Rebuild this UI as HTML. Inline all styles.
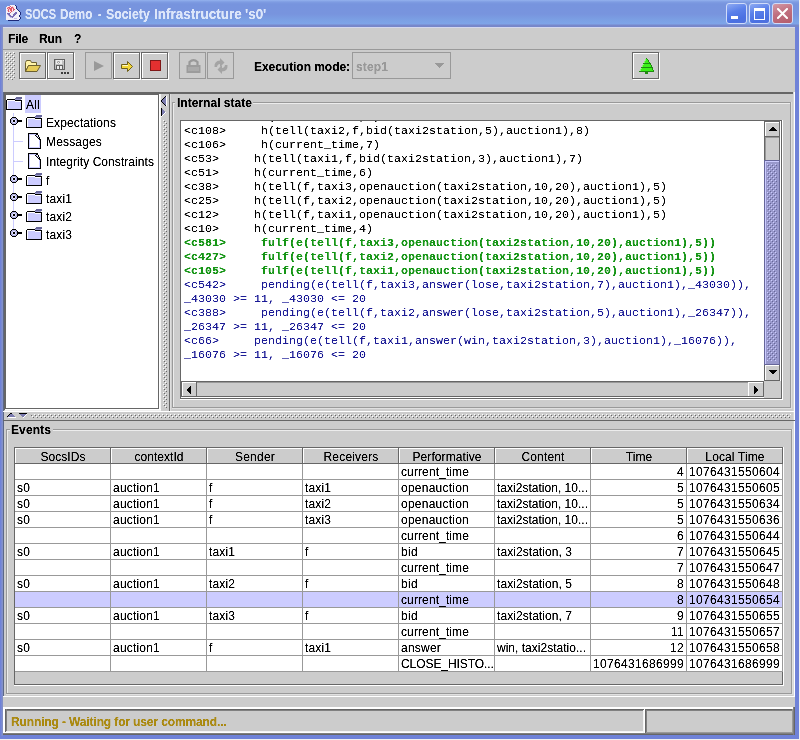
<!DOCTYPE html>
<html><head><meta charset="utf-8"><title>SOCS Demo</title>
<style>
html,body{margin:0;padding:0;width:800px;height:740px;overflow:hidden;background:#f0f0f0}
#root{position:absolute;left:0;top:0;width:800px;height:740px;overflow:hidden;will-change:transform}
#root div{position:absolute;box-sizing:content-box}
svg{display:block}
.t{white-space:pre;filter:url(#crisp)}
.crisp{filter:url(#crisp)}
</style></head><body><div id="root">
<svg width="0" height="0" style="position:absolute;left:0;top:0"><defs><filter id="crisp"><feComponentTransfer><feFuncA type="linear" slope="1.8" intercept="-0.25"/></feComponentTransfer></filter></defs></svg>
<div style="left:0px;top:0px;width:800px;height:740px;background:#f0f0f0;"></div>
<div style="left:0px;top:0px;width:799px;height:739px;background:#6f82d8;"></div>
<div style="left:1px;top:27px;width:1px;height:709px;background:#7a8ad2;"></div>
<div style="left:2px;top:27px;width:1px;height:709px;background:#8290c8;"></div>
<div style="left:0px;top:0px;width:799px;height:27px;background:linear-gradient(#94b2ee 0px,#7e9ce2 2px,#7794de 4px,#7894de 14px,#7ba0e4 20px,#7ea4e8 24px,#7888cc 25px,#7686c8 27px);"></div>
<div style="left:10px;top:5px;width:5px;height:1px;background:#f4f0f8;"></div>
<div style="left:15px;top:5px;width:1px;height:1px;background:#1c2878;"></div>
<div style="left:7px;top:6px;width:2px;height:1px;background:#f4f0f8;"></div>
<div style="left:9px;top:6px;width:1px;height:1px;background:#f2b8c4;"></div>
<div style="left:10px;top:6px;width:1px;height:1px;background:#e25868;"></div>
<div style="left:11px;top:6px;width:1px;height:1px;background:#f4f0f8;"></div>
<div style="left:12px;top:6px;width:1px;height:1px;background:#f2b8c4;"></div>
<div style="left:13px;top:6px;width:3px;height:1px;background:#f4f0f8;"></div>
<div style="left:16px;top:6px;width:1px;height:1px;background:#1c2878;"></div>
<div style="left:6px;top:7px;width:1px;height:1px;background:#f4f0f8;"></div>
<div style="left:7px;top:7px;width:1px;height:1px;background:#f2b8c4;"></div>
<div style="left:8px;top:7px;width:2px;height:1px;background:#e25868;"></div>
<div style="left:10px;top:7px;width:1px;height:1px;background:#f4f0f8;"></div>
<div style="left:11px;top:7px;width:2px;height:1px;background:#e25868;"></div>
<div style="left:13px;top:7px;width:1px;height:1px;background:#f2b8c4;"></div>
<div style="left:14px;top:7px;width:2px;height:1px;background:#f4f0f8;"></div>
<div style="left:16px;top:7px;width:1px;height:1px;background:#1c2878;"></div>
<div style="left:6px;top:8px;width:1px;height:1px;background:#f4f0f8;"></div>
<div style="left:7px;top:8px;width:1px;height:1px;background:#e25868;"></div>
<div style="left:8px;top:8px;width:1px;height:1px;background:#f2b8c4;"></div>
<div style="left:9px;top:8px;width:3px;height:1px;background:#e25868;"></div>
<div style="left:12px;top:8px;width:1px;height:1px;background:#f2b8c4;"></div>
<div style="left:13px;top:8px;width:1px;height:1px;background:#e25868;"></div>
<div style="left:14px;top:8px;width:2px;height:1px;background:#f4f0f8;"></div>
<div style="left:16px;top:8px;width:1px;height:1px;background:#1c2878;"></div>
<div style="left:6px;top:9px;width:2px;height:1px;background:#f4f0f8;"></div>
<div style="left:8px;top:9px;width:1px;height:1px;background:#e25868;"></div>
<div style="left:9px;top:9px;width:1px;height:1px;background:#f2b8c4;"></div>
<div style="left:10px;top:9px;width:2px;height:1px;background:#e25868;"></div>
<div style="left:12px;top:9px;width:1px;height:1px;background:#f4f0f8;"></div>
<div style="left:13px;top:9px;width:2px;height:1px;background:#e25868;"></div>
<div style="left:15px;top:9px;width:2px;height:1px;background:#f4f0f8;"></div>
<div style="left:17px;top:9px;width:1px;height:1px;background:#1c2878;"></div>
<div style="left:6px;top:10px;width:1px;height:1px;background:#f4f0f8;"></div>
<div style="left:7px;top:10px;width:1px;height:1px;background:#f2b8c4;"></div>
<div style="left:8px;top:10px;width:1px;height:1px;background:#e25868;"></div>
<div style="left:9px;top:10px;width:1px;height:1px;background:#f4f0f8;"></div>
<div style="left:10px;top:10px;width:2px;height:1px;background:#e25868;"></div>
<div style="left:12px;top:10px;width:1px;height:1px;background:#f4f0f8;"></div>
<div style="left:13px;top:10px;width:1px;height:1px;background:#e25868;"></div>
<div style="left:14px;top:10px;width:4px;height:1px;background:#f4f0f8;"></div>
<div style="left:18px;top:10px;width:1px;height:1px;background:#1c2878;"></div>
<div style="left:6px;top:11px;width:2px;height:1px;background:#f4f0f8;"></div>
<div style="left:8px;top:11px;width:1px;height:1px;background:#e25868;"></div>
<div style="left:9px;top:11px;width:1px;height:1px;background:#f2b8c4;"></div>
<div style="left:10px;top:11px;width:1px;height:1px;background:#f4f0f8;"></div>
<div style="left:11px;top:11px;width:1px;height:1px;background:#e25868;"></div>
<div style="left:12px;top:11px;width:1px;height:1px;background:#f2b8c4;"></div>
<div style="left:13px;top:11px;width:6px;height:1px;background:#f4f0f8;"></div>
<div style="left:19px;top:11px;width:1px;height:1px;background:#1c2878;"></div>
<div style="left:6px;top:12px;width:4px;height:1px;background:#f4f0f8;"></div>
<div style="left:10px;top:12px;width:1px;height:1px;background:#e25868;"></div>
<div style="left:11px;top:12px;width:4px;height:1px;background:#f4f0f8;"></div>
<div style="left:15px;top:12px;width:2px;height:1px;background:#7a6cb4;"></div>
<div style="left:17px;top:12px;width:3px;height:1px;background:#f4f0f8;"></div>
<div style="left:20px;top:12px;width:1px;height:1px;background:#1c2878;"></div>
<div style="left:6px;top:13px;width:1px;height:1px;background:#f4f0f8;"></div>
<div style="left:7px;top:13px;width:3px;height:1px;background:#7a6cb4;"></div>
<div style="left:10px;top:13px;width:4px;height:1px;background:#f4f0f8;"></div>
<div style="left:14px;top:13px;width:3px;height:1px;background:#7a6cb4;"></div>
<div style="left:17px;top:13px;width:3px;height:1px;background:#f4f0f8;"></div>
<div style="left:20px;top:13px;width:1px;height:1px;background:#1c2878;"></div>
<div style="left:6px;top:14px;width:1px;height:1px;background:#f4f0f8;"></div>
<div style="left:7px;top:14px;width:1px;height:1px;background:#c4bce6;"></div>
<div style="left:8px;top:14px;width:2px;height:1px;background:#7a6cb4;"></div>
<div style="left:10px;top:14px;width:3px;height:1px;background:#f4f0f8;"></div>
<div style="left:13px;top:14px;width:3px;height:1px;background:#7a6cb4;"></div>
<div style="left:16px;top:14px;width:4px;height:1px;background:#f4f0f8;"></div>
<div style="left:20px;top:14px;width:1px;height:1px;background:#1c2878;"></div>
<div style="left:6px;top:15px;width:2px;height:1px;background:#f4f0f8;"></div>
<div style="left:8px;top:15px;width:1px;height:1px;background:#c4bce6;"></div>
<div style="left:9px;top:15px;width:2px;height:1px;background:#7a6cb4;"></div>
<div style="left:11px;top:15px;width:2px;height:1px;background:#f4f0f8;"></div>
<div style="left:13px;top:15px;width:2px;height:1px;background:#7a6cb4;"></div>
<div style="left:15px;top:15px;width:4px;height:1px;background:#f4f0f8;"></div>
<div style="left:19px;top:15px;width:1px;height:1px;background:#1c2878;"></div>
<div style="left:6px;top:16px;width:3px;height:1px;background:#f4f0f8;"></div>
<div style="left:9px;top:16px;width:1px;height:1px;background:#c4bce6;"></div>
<div style="left:10px;top:16px;width:4px;height:1px;background:#7a6cb4;"></div>
<div style="left:14px;top:16px;width:5px;height:1px;background:#f4f0f8;"></div>
<div style="left:19px;top:16px;width:1px;height:1px;background:#1c2878;"></div>
<div style="left:6px;top:17px;width:4px;height:1px;background:#f4f0f8;"></div>
<div style="left:10px;top:17px;width:2px;height:1px;background:#c4bce6;"></div>
<div style="left:12px;top:17px;width:1px;height:1px;background:#7a6cb4;"></div>
<div style="left:13px;top:17px;width:7px;height:1px;background:#f4f0f8;"></div>
<div style="left:20px;top:17px;width:1px;height:1px;background:#1c2878;"></div>
<div style="left:6px;top:18px;width:8px;height:1px;background:#f4f0f8;"></div>
<div style="left:14px;top:18px;width:3px;height:1px;background:#c4bce6;"></div>
<div style="left:17px;top:18px;width:3px;height:1px;background:#f4f0f8;"></div>
<div style="left:20px;top:18px;width:1px;height:1px;background:#1c2878;"></div>
<div style="left:6px;top:19px;width:13px;height:1px;background:#f4f0f8;"></div>
<div style="left:19px;top:19px;width:1px;height:1px;background:#1c2878;"></div>
<div style="left:8px;top:20px;width:11px;height:1px;background:#1c2878;"></div>
<div class="t" style="left:25px;top:4px;font:bold 14px 'Liberation Sans', sans-serif;line-height:20px;color:#dce6fa;transform:scaleX(0.783);transform-origin:0 0">SOCS</div>
<div class="t" style="left:60px;top:4px;font:bold 14px 'Liberation Sans', sans-serif;line-height:20px;color:#dce6fa;transform:scaleX(0.831);transform-origin:0 0">Demo</div>
<div class="t" style="left:98px;top:4px;font:bold 14px 'Liberation Sans', sans-serif;line-height:20px;color:#dce6fa;transform:scaleX(0.750);transform-origin:0 0">-</div>
<div class="t" style="left:106px;top:4px;font:bold 14px 'Liberation Sans', sans-serif;line-height:20px;color:#dce6fa;transform:scaleX(0.878);transform-origin:0 0">Society</div>
<div class="t" style="left:154px;top:4px;font:bold 14px 'Liberation Sans', sans-serif;line-height:20px;color:#dce6fa;transform:scaleX(0.965);transform-origin:0 0">Infrastructure</div>
<div class="t" style="left:245px;top:4px;font:bold 14px 'Liberation Sans', sans-serif;line-height:20px;color:#dce6fa;transform:scaleX(0.957);transform-origin:0 0">&#x27;s0&#x27;</div>
<div style="left:726px;top:3px;width:19px;height:19px;border:1px solid #d0dcfa;border-radius:3px;background:linear-gradient(160deg,#8eaaf2 0%,#5a80ea 40%,#4a70e2 75%,#5070dc 100%)"></div>
<div style="left:749px;top:3px;width:19px;height:19px;border:1px solid #d0dcfa;border-radius:3px;background:linear-gradient(160deg,#8eaaf2 0%,#5a80ea 40%,#4a70e2 75%,#5070dc 100%)"></div>
<div style="left:772px;top:3px;width:19px;height:19px;border:1px solid #d0dcfa;border-radius:3px;background:linear-gradient(160deg,#d49aa6 0%,#c07080 45%,#b45c6c 100%)"></div>
<div style="left:731px;top:16px;width:7px;height:3px;background:#ffffff;"></div>
<div style="left:754px;top:8px;width:9px;height:8px;border:1px solid #fff;border-top-width:3px"></div>
<svg style="position:absolute;left:777px;top:8px" width="11" height="11" viewBox="0 0 11 11">
<path d="M1 1 L10 10 M10 1 L1 10" stroke="#fff" stroke-width="2" stroke-linecap="square"/></svg>
<div style="left:3px;top:27px;width:792px;height:708px;background:#cccccc;"></div>
<div style="left:3px;top:27px;width:792px;height:1px;background:#d4d8ee;"></div>
<div class="t" style="left:8px;top:29px;font:bold 12px 'Liberation Sans', sans-serif;line-height:20px;color:#000;letter-spacing:-0.168px;">File</div>
<div class="t" style="left:39px;top:29px;font:bold 12px 'Liberation Sans', sans-serif;line-height:20px;color:#000;letter-spacing:-0.109px;">Run</div>
<div class="t" style="left:74px;top:29px;font:bold 12px 'Liberation Sans', sans-serif;line-height:20px;color:#000;letter-spacing:-0.330px;">?</div>
<div style="left:3px;top:49px;width:792px;height:1px;background:#999999;"></div>
<svg style="position:absolute;left:5px;top:52px" width="10" height="28" shape-rendering="crispEdges">
<defs><pattern id="p1" x="0" y="0" width="4" height="4" patternUnits="userSpaceOnUse">
<rect width="4" height="4" fill="#cccccc"/>
<rect x="0" y="0" width="1" height="1" fill="#ffffff"/><rect x="2" y="2" width="1" height="1" fill="#ffffff"/>
<rect x="1" y="1" width="1" height="1" fill="#707070"/><rect x="3" y="3" width="1" height="1" fill="#707070"/>
</pattern></defs><rect width="10" height="28" fill="url(#p1)"/></svg>
<div style="left:20px;top:53px;width:27px;height:1px;background:#ffffff;"></div>
<div style="left:20px;top:79px;width:27px;height:1px;background:#ffffff;"></div>
<div style="left:20px;top:53px;width:1px;height:27px;background:#ffffff;"></div>
<div style="left:46px;top:53px;width:1px;height:27px;background:#ffffff;"></div>
<div style="left:19px;top:52px;width:27px;height:1px;background:#666666;"></div>
<div style="left:19px;top:78px;width:27px;height:1px;background:#666666;"></div>
<div style="left:19px;top:52px;width:1px;height:27px;background:#666666;"></div>
<div style="left:45px;top:52px;width:1px;height:27px;background:#666666;"></div>
<div style="left:48px;top:53px;width:27px;height:1px;background:#ffffff;"></div>
<div style="left:48px;top:79px;width:27px;height:1px;background:#ffffff;"></div>
<div style="left:48px;top:53px;width:1px;height:27px;background:#ffffff;"></div>
<div style="left:74px;top:53px;width:1px;height:27px;background:#ffffff;"></div>
<div style="left:47px;top:52px;width:27px;height:1px;background:#666666;"></div>
<div style="left:47px;top:78px;width:27px;height:1px;background:#666666;"></div>
<div style="left:47px;top:52px;width:1px;height:27px;background:#666666;"></div>
<div style="left:73px;top:52px;width:1px;height:27px;background:#666666;"></div>
<div style="left:85px;top:52px;width:27px;height:1px;background:#999999;"></div>
<div style="left:85px;top:78px;width:27px;height:1px;background:#999999;"></div>
<div style="left:85px;top:52px;width:1px;height:27px;background:#999999;"></div>
<div style="left:111px;top:52px;width:1px;height:27px;background:#999999;"></div>
<div style="left:114px;top:53px;width:27px;height:1px;background:#ffffff;"></div>
<div style="left:114px;top:79px;width:27px;height:1px;background:#ffffff;"></div>
<div style="left:114px;top:53px;width:1px;height:27px;background:#ffffff;"></div>
<div style="left:140px;top:53px;width:1px;height:27px;background:#ffffff;"></div>
<div style="left:113px;top:52px;width:27px;height:1px;background:#666666;"></div>
<div style="left:113px;top:78px;width:27px;height:1px;background:#666666;"></div>
<div style="left:113px;top:52px;width:1px;height:27px;background:#666666;"></div>
<div style="left:139px;top:52px;width:1px;height:27px;background:#666666;"></div>
<div style="left:142px;top:53px;width:27px;height:1px;background:#ffffff;"></div>
<div style="left:142px;top:79px;width:27px;height:1px;background:#ffffff;"></div>
<div style="left:142px;top:53px;width:1px;height:27px;background:#ffffff;"></div>
<div style="left:168px;top:53px;width:1px;height:27px;background:#ffffff;"></div>
<div style="left:141px;top:52px;width:27px;height:1px;background:#666666;"></div>
<div style="left:141px;top:78px;width:27px;height:1px;background:#666666;"></div>
<div style="left:141px;top:52px;width:1px;height:27px;background:#666666;"></div>
<div style="left:167px;top:52px;width:1px;height:27px;background:#666666;"></div>
<div style="left:179px;top:52px;width:27px;height:1px;background:#999999;"></div>
<div style="left:179px;top:78px;width:27px;height:1px;background:#999999;"></div>
<div style="left:179px;top:52px;width:1px;height:27px;background:#999999;"></div>
<div style="left:205px;top:52px;width:1px;height:27px;background:#999999;"></div>
<div style="left:207px;top:52px;width:27px;height:1px;background:#999999;"></div>
<div style="left:207px;top:78px;width:27px;height:1px;background:#999999;"></div>
<div style="left:207px;top:52px;width:1px;height:27px;background:#999999;"></div>
<div style="left:233px;top:52px;width:1px;height:27px;background:#999999;"></div>
<div style="left:633px;top:53px;width:27px;height:1px;background:#ffffff;"></div>
<div style="left:633px;top:79px;width:27px;height:1px;background:#ffffff;"></div>
<div style="left:633px;top:53px;width:1px;height:27px;background:#ffffff;"></div>
<div style="left:659px;top:53px;width:1px;height:27px;background:#ffffff;"></div>
<div style="left:632px;top:52px;width:27px;height:1px;background:#666666;"></div>
<div style="left:632px;top:78px;width:27px;height:1px;background:#666666;"></div>
<div style="left:632px;top:52px;width:1px;height:27px;background:#666666;"></div>
<div style="left:658px;top:52px;width:1px;height:27px;background:#666666;"></div>
<svg style="position:absolute;left:24px;top:59px" width="18" height="15" viewBox="0 0 18 15">
<path d="M1.5 3.5 L2.5 1.5 L6.5 1.5 L7.5 3.5 L12.5 3.5 L12.5 6.5 L4.5 6.5 L1.5 12.5 Z" fill="#fff3a8" stroke="#6c6030" stroke-width="1"/>
<path d="M1.5 12.5 L4.5 6.5 L16.5 6.5 L13 12.5 Z" fill="#e6cc58" stroke="#6c6030" stroke-width="1"/>
</svg>
<div style="left:54px;top:59px;width:11px;height:1px;background:#606060;"></div>
<div style="left:54px;top:60px;width:1px;height:1px;background:#606060;"></div>
<div style="left:55px;top:60px;width:1px;height:1px;background:#c0c0c0;"></div>
<div style="left:56px;top:60px;width:6px;height:1px;background:#ececec;"></div>
<div style="left:62px;top:60px;width:1px;height:1px;background:#c0c0c0;"></div>
<div style="left:63px;top:60px;width:1px;height:1px;background:#ececec;"></div>
<div style="left:64px;top:60px;width:1px;height:1px;background:#606060;"></div>
<div style="left:54px;top:61px;width:1px;height:1px;background:#606060;"></div>
<div style="left:55px;top:61px;width:1px;height:1px;background:#c0c0c0;"></div>
<div style="left:56px;top:61px;width:1px;height:1px;background:#ececec;"></div>
<div style="left:57px;top:61px;width:1px;height:1px;background:#c0c0c0;"></div>
<div style="left:58px;top:61px;width:1px;height:1px;background:#a0a0a0;"></div>
<div style="left:59px;top:61px;width:1px;height:1px;background:#c0c0c0;"></div>
<div style="left:60px;top:61px;width:2px;height:1px;background:#ececec;"></div>
<div style="left:62px;top:61px;width:2px;height:1px;background:#c0c0c0;"></div>
<div style="left:64px;top:61px;width:1px;height:1px;background:#606060;"></div>
<div style="left:54px;top:62px;width:1px;height:1px;background:#606060;"></div>
<div style="left:55px;top:62px;width:1px;height:1px;background:#c0c0c0;"></div>
<div style="left:56px;top:62px;width:1px;height:1px;background:#ececec;"></div>
<div style="left:57px;top:62px;width:1px;height:1px;background:#a0a0a0;"></div>
<div style="left:58px;top:62px;width:1px;height:1px;background:#ececec;"></div>
<div style="left:59px;top:62px;width:1px;height:1px;background:#a0a0a0;"></div>
<div style="left:60px;top:62px;width:2px;height:1px;background:#ececec;"></div>
<div style="left:62px;top:62px;width:2px;height:1px;background:#c0c0c0;"></div>
<div style="left:64px;top:62px;width:1px;height:1px;background:#606060;"></div>
<div style="left:54px;top:63px;width:1px;height:1px;background:#606060;"></div>
<div style="left:55px;top:63px;width:1px;height:1px;background:#c0c0c0;"></div>
<div style="left:56px;top:63px;width:2px;height:1px;background:#ececec;"></div>
<div style="left:58px;top:63px;width:1px;height:1px;background:#c0c0c0;"></div>
<div style="left:59px;top:63px;width:3px;height:1px;background:#ececec;"></div>
<div style="left:62px;top:63px;width:2px;height:1px;background:#c0c0c0;"></div>
<div style="left:64px;top:63px;width:1px;height:1px;background:#606060;"></div>
<div style="left:54px;top:64px;width:1px;height:1px;background:#606060;"></div>
<div style="left:55px;top:64px;width:9px;height:1px;background:#c0c0c0;"></div>
<div style="left:64px;top:64px;width:1px;height:1px;background:#606060;"></div>
<div style="left:54px;top:65px;width:1px;height:1px;background:#606060;"></div>
<div style="left:55px;top:65px;width:1px;height:1px;background:#c0c0c0;"></div>
<div style="left:56px;top:65px;width:7px;height:1px;background:#606060;"></div>
<div style="left:63px;top:65px;width:1px;height:1px;background:#c0c0c0;"></div>
<div style="left:64px;top:65px;width:1px;height:1px;background:#606060;"></div>
<div style="left:54px;top:66px;width:1px;height:1px;background:#606060;"></div>
<div style="left:55px;top:66px;width:1px;height:1px;background:#c0c0c0;"></div>
<div style="left:56px;top:66px;width:1px;height:1px;background:#606060;"></div>
<div style="left:57px;top:66px;width:2px;height:1px;background:#ececec;"></div>
<div style="left:59px;top:66px;width:1px;height:1px;background:#606060;"></div>
<div style="left:60px;top:66px;width:2px;height:1px;background:#ececec;"></div>
<div style="left:62px;top:66px;width:1px;height:1px;background:#606060;"></div>
<div style="left:63px;top:66px;width:1px;height:1px;background:#c0c0c0;"></div>
<div style="left:64px;top:66px;width:1px;height:1px;background:#606060;"></div>
<div style="left:54px;top:67px;width:1px;height:1px;background:#606060;"></div>
<div style="left:55px;top:67px;width:1px;height:1px;background:#c0c0c0;"></div>
<div style="left:56px;top:67px;width:1px;height:1px;background:#606060;"></div>
<div style="left:57px;top:67px;width:2px;height:1px;background:#ececec;"></div>
<div style="left:59px;top:67px;width:1px;height:1px;background:#606060;"></div>
<div style="left:60px;top:67px;width:2px;height:1px;background:#ececec;"></div>
<div style="left:62px;top:67px;width:1px;height:1px;background:#606060;"></div>
<div style="left:63px;top:67px;width:1px;height:1px;background:#c0c0c0;"></div>
<div style="left:64px;top:67px;width:1px;height:1px;background:#606060;"></div>
<div style="left:54px;top:68px;width:1px;height:1px;background:#606060;"></div>
<div style="left:55px;top:68px;width:1px;height:1px;background:#c0c0c0;"></div>
<div style="left:56px;top:68px;width:1px;height:1px;background:#606060;"></div>
<div style="left:57px;top:68px;width:2px;height:1px;background:#ececec;"></div>
<div style="left:59px;top:68px;width:1px;height:1px;background:#606060;"></div>
<div style="left:60px;top:68px;width:2px;height:1px;background:#ececec;"></div>
<div style="left:62px;top:68px;width:1px;height:1px;background:#606060;"></div>
<div style="left:63px;top:68px;width:1px;height:1px;background:#c0c0c0;"></div>
<div style="left:64px;top:68px;width:1px;height:1px;background:#606060;"></div>
<div style="left:54px;top:69px;width:11px;height:1px;background:#606060;"></div>
<div style="left:61px;top:72px;width:2px;height:1px;background:#3c3c3c;"></div>
<div style="left:64px;top:72px;width:2px;height:1px;background:#3c3c3c;"></div>
<div style="left:67px;top:72px;width:2px;height:1px;background:#3c3c3c;"></div>
<div style="left:61px;top:73px;width:2px;height:1px;background:#3c3c3c;"></div>
<div style="left:64px;top:73px;width:2px;height:1px;background:#3c3c3c;"></div>
<div style="left:67px;top:73px;width:2px;height:1px;background:#3c3c3c;"></div>
<svg style="position:absolute;left:94px;top:61px" width="11" height="11"><path d="M0 0 L10 5 L0 10 Z" fill="#999"/></svg>
<svg style="position:absolute;left:120px;top:60px" width="14" height="13" viewBox="0 0 14 13">
<path d="M1.5 4.5 L7.5 4.5 L7.5 1.5 L12.5 6.5 L7.5 11.5 L7.5 8.5 L1.5 8.5 Z" fill="#f4d838" stroke="#706018" stroke-width="1"/>
<path d="M2.5 5.5 L8 5.5" stroke="#fff8c8" stroke-width="1"/></svg>
<div style="left:150px;top:60px;width:11px;height:11px;background:#801818;"></div>
<div style="left:151px;top:61px;width:9px;height:9px;background:#e43030;"></div>
<svg style="position:absolute;left:185px;top:57px" width="17" height="18" viewBox="0 0 17 18">
<path d="M4.5 8 L4.5 5 Q8.5 1 12.5 5 L12.5 8" fill="none" stroke="#999" stroke-width="2.2"/>
<rect x="1.5" y="8" width="14" height="8" fill="#9c9c9c"/>
<path d="M3 11 H14 M3 13 H14" stroke="#b8b8b8" stroke-width="1"/></svg>
<svg style="position:absolute;left:212px;top:57px" width="18" height="18" viewBox="0 0 18 18">
<path d="M2.5 10 Q2 4 8 3.5 L8 1 L12.5 5.5 L8 10 L8 7 Q5.5 7 5 10 Z" fill="#a4a4a4"/>
<path d="M15.5 8 Q16 14 10 14.5 L10 17 L5.5 12.5 L10 8 L10 11 Q12.5 11 13 8 Z" fill="#a4a4a4"/></svg>
<div style="left:646px;top:58px;width:1px;height:1px;background:#1f8a10;"></div>
<div style="left:645px;top:59px;width:1px;height:1px;background:#8cf070;"></div>
<div style="left:646px;top:59px;width:1px;height:1px;background:#3cf018;"></div>
<div style="left:647px;top:59px;width:1px;height:1px;background:#1f8a10;"></div>
<div style="left:645px;top:60px;width:1px;height:1px;background:#8cf070;"></div>
<div style="left:646px;top:60px;width:2px;height:1px;background:#3cf018;"></div>
<div style="left:648px;top:60px;width:1px;height:1px;background:#1f8a10;"></div>
<div style="left:644px;top:61px;width:1px;height:1px;background:#8cf070;"></div>
<div style="left:645px;top:61px;width:3px;height:1px;background:#3cf018;"></div>
<div style="left:648px;top:61px;width:1px;height:1px;background:#1f8a10;"></div>
<div style="left:644px;top:62px;width:1px;height:1px;background:#8cf070;"></div>
<div style="left:645px;top:62px;width:4px;height:1px;background:#3cf018;"></div>
<div style="left:649px;top:62px;width:1px;height:1px;background:#1f8a10;"></div>
<div style="left:643px;top:63px;width:8px;height:1px;background:#1f8a10;"></div>
<div style="left:643px;top:64px;width:1px;height:1px;background:#8cf070;"></div>
<div style="left:644px;top:64px;width:6px;height:1px;background:#3cf018;"></div>
<div style="left:650px;top:64px;width:1px;height:1px;background:#1f8a10;"></div>
<div style="left:642px;top:65px;width:1px;height:1px;background:#8cf070;"></div>
<div style="left:643px;top:65px;width:8px;height:1px;background:#3cf018;"></div>
<div style="left:651px;top:65px;width:1px;height:1px;background:#1f8a10;"></div>
<div style="left:642px;top:66px;width:1px;height:1px;background:#8cf070;"></div>
<div style="left:643px;top:66px;width:8px;height:1px;background:#3cf018;"></div>
<div style="left:651px;top:66px;width:1px;height:1px;background:#1f8a10;"></div>
<div style="left:641px;top:67px;width:12px;height:1px;background:#1f8a10;"></div>
<div style="left:641px;top:68px;width:1px;height:1px;background:#8cf070;"></div>
<div style="left:642px;top:68px;width:10px;height:1px;background:#3cf018;"></div>
<div style="left:652px;top:68px;width:1px;height:1px;background:#1f8a10;"></div>
<div style="left:640px;top:69px;width:1px;height:1px;background:#8cf070;"></div>
<div style="left:641px;top:69px;width:11px;height:1px;background:#3cf018;"></div>
<div style="left:652px;top:69px;width:1px;height:1px;background:#1f8a10;"></div>
<div style="left:640px;top:70px;width:1px;height:1px;background:#8cf070;"></div>
<div style="left:641px;top:70px;width:12px;height:1px;background:#3cf018;"></div>
<div style="left:653px;top:70px;width:1px;height:1px;background:#1f8a10;"></div>
<div style="left:639px;top:71px;width:15px;height:1px;background:#1f8a10;"></div>
<div style="left:645px;top:72px;width:3px;height:1px;background:#1f8a10;"></div>
<div style="left:645px;top:73px;width:3px;height:1px;background:#1f8a10;"></div>
<div class="t" style="left:254px;top:57px;font:bold 12px 'Liberation Sans', sans-serif;line-height:20px;color:#000;letter-spacing:-0.045px;">Execution mode:</div>
<div style="left:352px;top:52px;width:99px;height:1px;background:#999999;"></div>
<div style="left:352px;top:78px;width:99px;height:1px;background:#999999;"></div>
<div style="left:352px;top:52px;width:1px;height:27px;background:#999999;"></div>
<div style="left:450px;top:52px;width:1px;height:27px;background:#999999;"></div>
<div class="t" style="left:356px;top:57px;font:bold 12px 'Liberation Sans', sans-serif;line-height:20px;color:#999999;letter-spacing:0.130px;">step1</div>
<svg style="position:absolute;left:434px;top:63px" width="11" height="6" shape-rendering="crispEdges"><path d="M0 0 L10 0 L5 5 Z" fill="#999"/></svg>
<div style="left:3px;top:92px;width:792px;height:1px;background:#666666;"></div>
<div style="left:3px;top:93px;width:792px;height:1px;background:#666666;"></div>
<div style="left:3px;top:92px;width:1px;height:605px;background:#5c6888;"></div>
<div style="left:4px;top:92px;width:1px;height:318px;background:#666666;"></div>
<div style="left:793px;top:92px;width:1px;height:605px;background:#d8d8d8;"></div>
<div style="left:794px;top:92px;width:1px;height:605px;background:#ffffff;"></div>
<div style="left:3px;top:696px;width:792px;height:1px;background:#ffffff;"></div>
<div style="left:6px;top:95px;width:152px;height:313px;background:#ffffff;"></div>
<div style="left:5px;top:94px;width:154px;height:1px;background:#666666;"></div>
<div style="left:5px;top:408px;width:154px;height:1px;background:#666666;"></div>
<div style="left:5px;top:94px;width:1px;height:315px;background:#666666;"></div>
<div style="left:158px;top:94px;width:1px;height:315px;background:#666666;"></div>
<div style="left:159px;top:94px;width:1px;height:317px;background:#ffffff;"></div>
<div style="left:160px;top:94px;width:1px;height:317px;background:#f4f4f4;"></div>
<div style="left:5px;top:409px;width:156px;height:1px;background:#ffffff;"></div>
<div style="left:5px;top:410px;width:156px;height:1px;background:#f0f0f0;"></div>
<div style="left:13px;top:113px;width:1px;height:122px;background:#ccccff;"></div>
<div style="left:14px;top:141px;width:9px;height:1px;background:#ccccff;"></div>
<div style="left:14px;top:161px;width:9px;height:1px;background:#ccccff;"></div>
<div style="left:25px;top:95px;width:16px;height:18px;background:#ccccff;"></div>
<div style="left:16px;top:97px;width:6px;height:1px;background:#666699;"></div>
<div style="left:15px;top:98px;width:7px;height:1px;background:#666699;"></div>
<div style="left:7px;top:99px;width:8px;height:1px;background:#000000;"></div>
<div style="left:15px;top:99px;width:6px;height:1px;background:#9999cc;"></div>
<div style="left:6px;top:100px;width:1px;height:1px;background:#000000;"></div>
<div style="left:7px;top:100px;width:8px;height:1px;background:#ffffff;"></div>
<div style="left:15px;top:100px;width:7px;height:1px;background:#000000;"></div>
<div style="left:6px;top:101px;width:1px;height:1px;background:#000000;"></div>
<div style="left:7px;top:101px;width:1px;height:1px;background:#ffffff;"></div>
<div style="left:8px;top:101px;width:7px;height:1px;background:#ccccff;"></div>
<div style="left:15px;top:101px;width:6px;height:1px;background:#ffffff;"></div>
<div style="left:21px;top:101px;width:1px;height:1px;background:#000000;"></div>
<div style="left:6px;top:102px;width:1px;height:1px;background:#000000;"></div>
<div style="left:7px;top:102px;width:1px;height:1px;background:#ffffff;"></div>
<div style="left:8px;top:102px;width:13px;height:1px;background:#ccccff;"></div>
<div style="left:21px;top:102px;width:1px;height:1px;background:#000000;"></div>
<div style="left:6px;top:103px;width:1px;height:1px;background:#000000;"></div>
<div style="left:7px;top:103px;width:1px;height:1px;background:#ffffff;"></div>
<div style="left:8px;top:103px;width:13px;height:1px;background:#ccccff;"></div>
<div style="left:21px;top:103px;width:1px;height:1px;background:#000000;"></div>
<div style="left:6px;top:104px;width:1px;height:1px;background:#000000;"></div>
<div style="left:7px;top:104px;width:1px;height:1px;background:#ffffff;"></div>
<div style="left:8px;top:104px;width:13px;height:1px;background:#ccccff;"></div>
<div style="left:21px;top:104px;width:1px;height:1px;background:#000000;"></div>
<div style="left:6px;top:105px;width:1px;height:1px;background:#000000;"></div>
<div style="left:7px;top:105px;width:1px;height:1px;background:#ffffff;"></div>
<div style="left:8px;top:105px;width:13px;height:1px;background:#ccccff;"></div>
<div style="left:21px;top:105px;width:1px;height:1px;background:#000000;"></div>
<div style="left:6px;top:106px;width:1px;height:1px;background:#000000;"></div>
<div style="left:7px;top:106px;width:1px;height:1px;background:#ffffff;"></div>
<div style="left:8px;top:106px;width:13px;height:1px;background:#ccccff;"></div>
<div style="left:21px;top:106px;width:1px;height:1px;background:#000000;"></div>
<div style="left:6px;top:107px;width:1px;height:1px;background:#000000;"></div>
<div style="left:7px;top:107px;width:1px;height:1px;background:#ffffff;"></div>
<div style="left:8px;top:107px;width:13px;height:1px;background:#ccccff;"></div>
<div style="left:21px;top:107px;width:1px;height:1px;background:#000000;"></div>
<div style="left:6px;top:108px;width:1px;height:1px;background:#000000;"></div>
<div style="left:7px;top:108px;width:1px;height:1px;background:#ffffff;"></div>
<div style="left:8px;top:108px;width:13px;height:1px;background:#ccccff;"></div>
<div style="left:21px;top:108px;width:1px;height:1px;background:#000000;"></div>
<div style="left:6px;top:109px;width:16px;height:1px;background:#000000;"></div>
<div class="t" style="left:26px;top:95px;font:12px 'Liberation Sans', sans-serif;line-height:20px;color:#000;letter-spacing:0.221px;">All</div>
<div style="left:12px;top:117px;width:4px;height:1px;background:#000000;"></div>
<div style="left:11px;top:118px;width:1px;height:1px;background:#000000;"></div>
<div style="left:12px;top:118px;width:4px;height:1px;background:#b4b4e4;"></div>
<div style="left:16px;top:118px;width:1px;height:1px;background:#000000;"></div>
<div style="left:10px;top:119px;width:1px;height:1px;background:#000000;"></div>
<div style="left:11px;top:119px;width:2px;height:1px;background:#b4b4e4;"></div>
<div style="left:13px;top:119px;width:2px;height:1px;background:#e4e4ff;"></div>
<div style="left:15px;top:119px;width:2px;height:1px;background:#b4b4e4;"></div>
<div style="left:17px;top:119px;width:1px;height:1px;background:#000000;"></div>
<div style="left:10px;top:120px;width:1px;height:1px;background:#000000;"></div>
<div style="left:11px;top:120px;width:1px;height:1px;background:#b4b4e4;"></div>
<div style="left:12px;top:120px;width:1px;height:1px;background:#e4e4ff;"></div>
<div style="left:13px;top:120px;width:2px;height:1px;background:#000000;"></div>
<div style="left:15px;top:120px;width:1px;height:1px;background:#e4e4ff;"></div>
<div style="left:16px;top:120px;width:1px;height:1px;background:#b4b4e4;"></div>
<div style="left:17px;top:120px;width:5px;height:1px;background:#000000;"></div>
<div style="left:10px;top:121px;width:1px;height:1px;background:#000000;"></div>
<div style="left:11px;top:121px;width:1px;height:1px;background:#b4b4e4;"></div>
<div style="left:12px;top:121px;width:1px;height:1px;background:#e4e4ff;"></div>
<div style="left:13px;top:121px;width:2px;height:1px;background:#000000;"></div>
<div style="left:15px;top:121px;width:1px;height:1px;background:#e4e4ff;"></div>
<div style="left:16px;top:121px;width:1px;height:1px;background:#b4b4e4;"></div>
<div style="left:17px;top:121px;width:5px;height:1px;background:#000000;"></div>
<div style="left:10px;top:122px;width:1px;height:1px;background:#000000;"></div>
<div style="left:11px;top:122px;width:2px;height:1px;background:#b4b4e4;"></div>
<div style="left:13px;top:122px;width:2px;height:1px;background:#e4e4ff;"></div>
<div style="left:15px;top:122px;width:2px;height:1px;background:#b4b4e4;"></div>
<div style="left:17px;top:122px;width:1px;height:1px;background:#000000;"></div>
<div style="left:11px;top:123px;width:1px;height:1px;background:#000000;"></div>
<div style="left:12px;top:123px;width:4px;height:1px;background:#b4b4e4;"></div>
<div style="left:16px;top:123px;width:1px;height:1px;background:#000000;"></div>
<div style="left:12px;top:124px;width:4px;height:1px;background:#000000;"></div>
<div style="left:36px;top:115px;width:6px;height:1px;background:#666699;"></div>
<div style="left:35px;top:116px;width:7px;height:1px;background:#666699;"></div>
<div style="left:27px;top:117px;width:8px;height:1px;background:#000000;"></div>
<div style="left:35px;top:117px;width:6px;height:1px;background:#9999cc;"></div>
<div style="left:26px;top:118px;width:1px;height:1px;background:#000000;"></div>
<div style="left:27px;top:118px;width:8px;height:1px;background:#ffffff;"></div>
<div style="left:35px;top:118px;width:7px;height:1px;background:#000000;"></div>
<div style="left:26px;top:119px;width:1px;height:1px;background:#000000;"></div>
<div style="left:27px;top:119px;width:1px;height:1px;background:#ffffff;"></div>
<div style="left:28px;top:119px;width:7px;height:1px;background:#ccccff;"></div>
<div style="left:35px;top:119px;width:6px;height:1px;background:#ffffff;"></div>
<div style="left:41px;top:119px;width:1px;height:1px;background:#000000;"></div>
<div style="left:26px;top:120px;width:1px;height:1px;background:#000000;"></div>
<div style="left:27px;top:120px;width:1px;height:1px;background:#ffffff;"></div>
<div style="left:28px;top:120px;width:13px;height:1px;background:#ccccff;"></div>
<div style="left:41px;top:120px;width:1px;height:1px;background:#000000;"></div>
<div style="left:26px;top:121px;width:1px;height:1px;background:#000000;"></div>
<div style="left:27px;top:121px;width:1px;height:1px;background:#ffffff;"></div>
<div style="left:28px;top:121px;width:13px;height:1px;background:#ccccff;"></div>
<div style="left:41px;top:121px;width:1px;height:1px;background:#000000;"></div>
<div style="left:26px;top:122px;width:1px;height:1px;background:#000000;"></div>
<div style="left:27px;top:122px;width:1px;height:1px;background:#ffffff;"></div>
<div style="left:28px;top:122px;width:13px;height:1px;background:#ccccff;"></div>
<div style="left:41px;top:122px;width:1px;height:1px;background:#000000;"></div>
<div style="left:26px;top:123px;width:1px;height:1px;background:#000000;"></div>
<div style="left:27px;top:123px;width:1px;height:1px;background:#ffffff;"></div>
<div style="left:28px;top:123px;width:13px;height:1px;background:#ccccff;"></div>
<div style="left:41px;top:123px;width:1px;height:1px;background:#000000;"></div>
<div style="left:26px;top:124px;width:1px;height:1px;background:#000000;"></div>
<div style="left:27px;top:124px;width:1px;height:1px;background:#ffffff;"></div>
<div style="left:28px;top:124px;width:13px;height:1px;background:#ccccff;"></div>
<div style="left:41px;top:124px;width:1px;height:1px;background:#000000;"></div>
<div style="left:26px;top:125px;width:1px;height:1px;background:#000000;"></div>
<div style="left:27px;top:125px;width:1px;height:1px;background:#ffffff;"></div>
<div style="left:28px;top:125px;width:13px;height:1px;background:#ccccff;"></div>
<div style="left:41px;top:125px;width:1px;height:1px;background:#000000;"></div>
<div style="left:26px;top:126px;width:1px;height:1px;background:#000000;"></div>
<div style="left:27px;top:126px;width:1px;height:1px;background:#ffffff;"></div>
<div style="left:28px;top:126px;width:13px;height:1px;background:#ccccff;"></div>
<div style="left:41px;top:126px;width:1px;height:1px;background:#000000;"></div>
<div style="left:26px;top:127px;width:16px;height:1px;background:#000000;"></div>
<div class="t" style="left:46px;top:113px;font:12px 'Liberation Sans', sans-serif;line-height:20px;color:#000;letter-spacing:0.108px;">Expectations</div>
<div style="left:28px;top:133px;width:10px;height:1px;background:#000000;"></div>
<div style="left:28px;top:134px;width:1px;height:1px;background:#000000;"></div>
<div style="left:29px;top:134px;width:7px;height:1px;background:#ccccff;"></div>
<div style="left:36px;top:134px;width:2px;height:1px;background:#000000;"></div>
<div style="left:28px;top:135px;width:1px;height:1px;background:#000000;"></div>
<div style="left:29px;top:135px;width:1px;height:1px;background:#ccccff;"></div>
<div style="left:30px;top:135px;width:5px;height:1px;background:#ffffff;"></div>
<div style="left:35px;top:135px;width:1px;height:1px;background:#000000;"></div>
<div style="left:36px;top:135px;width:1px;height:1px;background:#ccccff;"></div>
<div style="left:37px;top:135px;width:1px;height:1px;background:#ffffff;"></div>
<div style="left:38px;top:135px;width:1px;height:1px;background:#000000;"></div>
<div style="left:28px;top:136px;width:1px;height:1px;background:#000000;"></div>
<div style="left:29px;top:136px;width:1px;height:1px;background:#ccccff;"></div>
<div style="left:30px;top:136px;width:6px;height:1px;background:#ffffff;"></div>
<div style="left:36px;top:136px;width:1px;height:1px;background:#000000;"></div>
<div style="left:37px;top:136px;width:1px;height:1px;background:#ccccff;"></div>
<div style="left:38px;top:136px;width:1px;height:1px;background:#000000;"></div>
<div style="left:28px;top:137px;width:1px;height:1px;background:#000000;"></div>
<div style="left:29px;top:137px;width:1px;height:1px;background:#ccccff;"></div>
<div style="left:30px;top:137px;width:7px;height:1px;background:#ffffff;"></div>
<div style="left:37px;top:137px;width:1px;height:1px;background:#000000;"></div>
<div style="left:38px;top:137px;width:1px;height:1px;background:#ccccff;"></div>
<div style="left:39px;top:137px;width:1px;height:1px;background:#000000;"></div>
<div style="left:28px;top:138px;width:1px;height:1px;background:#000000;"></div>
<div style="left:29px;top:138px;width:1px;height:1px;background:#ccccff;"></div>
<div style="left:30px;top:138px;width:8px;height:1px;background:#ffffff;"></div>
<div style="left:38px;top:138px;width:2px;height:1px;background:#000000;"></div>
<div style="left:28px;top:139px;width:1px;height:1px;background:#000000;"></div>
<div style="left:29px;top:139px;width:1px;height:1px;background:#ccccff;"></div>
<div style="left:30px;top:139px;width:9px;height:1px;background:#ffffff;"></div>
<div style="left:39px;top:139px;width:2px;height:1px;background:#000000;"></div>
<div style="left:28px;top:140px;width:1px;height:1px;background:#000000;"></div>
<div style="left:29px;top:140px;width:1px;height:1px;background:#ccccff;"></div>
<div style="left:30px;top:140px;width:9px;height:1px;background:#ffffff;"></div>
<div style="left:39px;top:140px;width:1px;height:1px;background:#ccccff;"></div>
<div style="left:40px;top:140px;width:1px;height:1px;background:#000000;"></div>
<div style="left:28px;top:141px;width:1px;height:1px;background:#000000;"></div>
<div style="left:29px;top:141px;width:1px;height:1px;background:#ccccff;"></div>
<div style="left:30px;top:141px;width:9px;height:1px;background:#ffffff;"></div>
<div style="left:39px;top:141px;width:1px;height:1px;background:#ccccff;"></div>
<div style="left:40px;top:141px;width:1px;height:1px;background:#000000;"></div>
<div style="left:28px;top:142px;width:1px;height:1px;background:#000000;"></div>
<div style="left:29px;top:142px;width:1px;height:1px;background:#ccccff;"></div>
<div style="left:30px;top:142px;width:9px;height:1px;background:#ffffff;"></div>
<div style="left:39px;top:142px;width:1px;height:1px;background:#ccccff;"></div>
<div style="left:40px;top:142px;width:1px;height:1px;background:#000000;"></div>
<div style="left:28px;top:143px;width:1px;height:1px;background:#000000;"></div>
<div style="left:29px;top:143px;width:1px;height:1px;background:#ccccff;"></div>
<div style="left:30px;top:143px;width:9px;height:1px;background:#ffffff;"></div>
<div style="left:39px;top:143px;width:1px;height:1px;background:#ccccff;"></div>
<div style="left:40px;top:143px;width:1px;height:1px;background:#000000;"></div>
<div style="left:28px;top:144px;width:1px;height:1px;background:#000000;"></div>
<div style="left:29px;top:144px;width:1px;height:1px;background:#ccccff;"></div>
<div style="left:30px;top:144px;width:9px;height:1px;background:#ffffff;"></div>
<div style="left:39px;top:144px;width:1px;height:1px;background:#ccccff;"></div>
<div style="left:40px;top:144px;width:1px;height:1px;background:#000000;"></div>
<div style="left:28px;top:145px;width:1px;height:1px;background:#000000;"></div>
<div style="left:29px;top:145px;width:1px;height:1px;background:#ccccff;"></div>
<div style="left:30px;top:145px;width:9px;height:1px;background:#ffffff;"></div>
<div style="left:39px;top:145px;width:1px;height:1px;background:#ccccff;"></div>
<div style="left:40px;top:145px;width:1px;height:1px;background:#000000;"></div>
<div style="left:28px;top:146px;width:1px;height:1px;background:#000000;"></div>
<div style="left:29px;top:146px;width:1px;height:1px;background:#ccccff;"></div>
<div style="left:30px;top:146px;width:9px;height:1px;background:#ffffff;"></div>
<div style="left:39px;top:146px;width:1px;height:1px;background:#ccccff;"></div>
<div style="left:40px;top:146px;width:1px;height:1px;background:#000000;"></div>
<div style="left:28px;top:147px;width:1px;height:1px;background:#000000;"></div>
<div style="left:29px;top:147px;width:11px;height:1px;background:#ccccff;"></div>
<div style="left:40px;top:147px;width:1px;height:1px;background:#000000;"></div>
<div style="left:28px;top:148px;width:13px;height:1px;background:#000000;"></div>
<div class="t" style="left:46px;top:132px;font:12px 'Liberation Sans', sans-serif;line-height:20px;color:#000;letter-spacing:0.164px;">Messages</div>
<div style="left:28px;top:153px;width:10px;height:1px;background:#000000;"></div>
<div style="left:28px;top:154px;width:1px;height:1px;background:#000000;"></div>
<div style="left:29px;top:154px;width:7px;height:1px;background:#ccccff;"></div>
<div style="left:36px;top:154px;width:2px;height:1px;background:#000000;"></div>
<div style="left:28px;top:155px;width:1px;height:1px;background:#000000;"></div>
<div style="left:29px;top:155px;width:1px;height:1px;background:#ccccff;"></div>
<div style="left:30px;top:155px;width:5px;height:1px;background:#ffffff;"></div>
<div style="left:35px;top:155px;width:1px;height:1px;background:#000000;"></div>
<div style="left:36px;top:155px;width:1px;height:1px;background:#ccccff;"></div>
<div style="left:37px;top:155px;width:1px;height:1px;background:#ffffff;"></div>
<div style="left:38px;top:155px;width:1px;height:1px;background:#000000;"></div>
<div style="left:28px;top:156px;width:1px;height:1px;background:#000000;"></div>
<div style="left:29px;top:156px;width:1px;height:1px;background:#ccccff;"></div>
<div style="left:30px;top:156px;width:6px;height:1px;background:#ffffff;"></div>
<div style="left:36px;top:156px;width:1px;height:1px;background:#000000;"></div>
<div style="left:37px;top:156px;width:1px;height:1px;background:#ccccff;"></div>
<div style="left:38px;top:156px;width:1px;height:1px;background:#000000;"></div>
<div style="left:28px;top:157px;width:1px;height:1px;background:#000000;"></div>
<div style="left:29px;top:157px;width:1px;height:1px;background:#ccccff;"></div>
<div style="left:30px;top:157px;width:7px;height:1px;background:#ffffff;"></div>
<div style="left:37px;top:157px;width:1px;height:1px;background:#000000;"></div>
<div style="left:38px;top:157px;width:1px;height:1px;background:#ccccff;"></div>
<div style="left:39px;top:157px;width:1px;height:1px;background:#000000;"></div>
<div style="left:28px;top:158px;width:1px;height:1px;background:#000000;"></div>
<div style="left:29px;top:158px;width:1px;height:1px;background:#ccccff;"></div>
<div style="left:30px;top:158px;width:8px;height:1px;background:#ffffff;"></div>
<div style="left:38px;top:158px;width:2px;height:1px;background:#000000;"></div>
<div style="left:28px;top:159px;width:1px;height:1px;background:#000000;"></div>
<div style="left:29px;top:159px;width:1px;height:1px;background:#ccccff;"></div>
<div style="left:30px;top:159px;width:9px;height:1px;background:#ffffff;"></div>
<div style="left:39px;top:159px;width:2px;height:1px;background:#000000;"></div>
<div style="left:28px;top:160px;width:1px;height:1px;background:#000000;"></div>
<div style="left:29px;top:160px;width:1px;height:1px;background:#ccccff;"></div>
<div style="left:30px;top:160px;width:9px;height:1px;background:#ffffff;"></div>
<div style="left:39px;top:160px;width:1px;height:1px;background:#ccccff;"></div>
<div style="left:40px;top:160px;width:1px;height:1px;background:#000000;"></div>
<div style="left:28px;top:161px;width:1px;height:1px;background:#000000;"></div>
<div style="left:29px;top:161px;width:1px;height:1px;background:#ccccff;"></div>
<div style="left:30px;top:161px;width:9px;height:1px;background:#ffffff;"></div>
<div style="left:39px;top:161px;width:1px;height:1px;background:#ccccff;"></div>
<div style="left:40px;top:161px;width:1px;height:1px;background:#000000;"></div>
<div style="left:28px;top:162px;width:1px;height:1px;background:#000000;"></div>
<div style="left:29px;top:162px;width:1px;height:1px;background:#ccccff;"></div>
<div style="left:30px;top:162px;width:9px;height:1px;background:#ffffff;"></div>
<div style="left:39px;top:162px;width:1px;height:1px;background:#ccccff;"></div>
<div style="left:40px;top:162px;width:1px;height:1px;background:#000000;"></div>
<div style="left:28px;top:163px;width:1px;height:1px;background:#000000;"></div>
<div style="left:29px;top:163px;width:1px;height:1px;background:#ccccff;"></div>
<div style="left:30px;top:163px;width:9px;height:1px;background:#ffffff;"></div>
<div style="left:39px;top:163px;width:1px;height:1px;background:#ccccff;"></div>
<div style="left:40px;top:163px;width:1px;height:1px;background:#000000;"></div>
<div style="left:28px;top:164px;width:1px;height:1px;background:#000000;"></div>
<div style="left:29px;top:164px;width:1px;height:1px;background:#ccccff;"></div>
<div style="left:30px;top:164px;width:9px;height:1px;background:#ffffff;"></div>
<div style="left:39px;top:164px;width:1px;height:1px;background:#ccccff;"></div>
<div style="left:40px;top:164px;width:1px;height:1px;background:#000000;"></div>
<div style="left:28px;top:165px;width:1px;height:1px;background:#000000;"></div>
<div style="left:29px;top:165px;width:1px;height:1px;background:#ccccff;"></div>
<div style="left:30px;top:165px;width:9px;height:1px;background:#ffffff;"></div>
<div style="left:39px;top:165px;width:1px;height:1px;background:#ccccff;"></div>
<div style="left:40px;top:165px;width:1px;height:1px;background:#000000;"></div>
<div style="left:28px;top:166px;width:1px;height:1px;background:#000000;"></div>
<div style="left:29px;top:166px;width:1px;height:1px;background:#ccccff;"></div>
<div style="left:30px;top:166px;width:9px;height:1px;background:#ffffff;"></div>
<div style="left:39px;top:166px;width:1px;height:1px;background:#ccccff;"></div>
<div style="left:40px;top:166px;width:1px;height:1px;background:#000000;"></div>
<div style="left:28px;top:167px;width:1px;height:1px;background:#000000;"></div>
<div style="left:29px;top:167px;width:11px;height:1px;background:#ccccff;"></div>
<div style="left:40px;top:167px;width:1px;height:1px;background:#000000;"></div>
<div style="left:28px;top:168px;width:13px;height:1px;background:#000000;"></div>
<div class="t" style="left:46px;top:152px;font:12px 'Liberation Sans', sans-serif;line-height:20px;color:#000;letter-spacing:0.061px;">Integrity Constraints</div>
<div style="left:12px;top:175px;width:4px;height:1px;background:#000000;"></div>
<div style="left:11px;top:176px;width:1px;height:1px;background:#000000;"></div>
<div style="left:12px;top:176px;width:4px;height:1px;background:#b4b4e4;"></div>
<div style="left:16px;top:176px;width:1px;height:1px;background:#000000;"></div>
<div style="left:10px;top:177px;width:1px;height:1px;background:#000000;"></div>
<div style="left:11px;top:177px;width:2px;height:1px;background:#b4b4e4;"></div>
<div style="left:13px;top:177px;width:2px;height:1px;background:#e4e4ff;"></div>
<div style="left:15px;top:177px;width:2px;height:1px;background:#b4b4e4;"></div>
<div style="left:17px;top:177px;width:1px;height:1px;background:#000000;"></div>
<div style="left:10px;top:178px;width:1px;height:1px;background:#000000;"></div>
<div style="left:11px;top:178px;width:1px;height:1px;background:#b4b4e4;"></div>
<div style="left:12px;top:178px;width:1px;height:1px;background:#e4e4ff;"></div>
<div style="left:13px;top:178px;width:2px;height:1px;background:#000000;"></div>
<div style="left:15px;top:178px;width:1px;height:1px;background:#e4e4ff;"></div>
<div style="left:16px;top:178px;width:1px;height:1px;background:#b4b4e4;"></div>
<div style="left:17px;top:178px;width:5px;height:1px;background:#000000;"></div>
<div style="left:10px;top:179px;width:1px;height:1px;background:#000000;"></div>
<div style="left:11px;top:179px;width:1px;height:1px;background:#b4b4e4;"></div>
<div style="left:12px;top:179px;width:1px;height:1px;background:#e4e4ff;"></div>
<div style="left:13px;top:179px;width:2px;height:1px;background:#000000;"></div>
<div style="left:15px;top:179px;width:1px;height:1px;background:#e4e4ff;"></div>
<div style="left:16px;top:179px;width:1px;height:1px;background:#b4b4e4;"></div>
<div style="left:17px;top:179px;width:5px;height:1px;background:#000000;"></div>
<div style="left:10px;top:180px;width:1px;height:1px;background:#000000;"></div>
<div style="left:11px;top:180px;width:2px;height:1px;background:#b4b4e4;"></div>
<div style="left:13px;top:180px;width:2px;height:1px;background:#e4e4ff;"></div>
<div style="left:15px;top:180px;width:2px;height:1px;background:#b4b4e4;"></div>
<div style="left:17px;top:180px;width:1px;height:1px;background:#000000;"></div>
<div style="left:11px;top:181px;width:1px;height:1px;background:#000000;"></div>
<div style="left:12px;top:181px;width:4px;height:1px;background:#b4b4e4;"></div>
<div style="left:16px;top:181px;width:1px;height:1px;background:#000000;"></div>
<div style="left:12px;top:182px;width:4px;height:1px;background:#000000;"></div>
<div style="left:36px;top:173px;width:6px;height:1px;background:#666699;"></div>
<div style="left:35px;top:174px;width:7px;height:1px;background:#666699;"></div>
<div style="left:27px;top:175px;width:8px;height:1px;background:#000000;"></div>
<div style="left:35px;top:175px;width:6px;height:1px;background:#9999cc;"></div>
<div style="left:26px;top:176px;width:1px;height:1px;background:#000000;"></div>
<div style="left:27px;top:176px;width:8px;height:1px;background:#ffffff;"></div>
<div style="left:35px;top:176px;width:7px;height:1px;background:#000000;"></div>
<div style="left:26px;top:177px;width:1px;height:1px;background:#000000;"></div>
<div style="left:27px;top:177px;width:1px;height:1px;background:#ffffff;"></div>
<div style="left:28px;top:177px;width:7px;height:1px;background:#ccccff;"></div>
<div style="left:35px;top:177px;width:6px;height:1px;background:#ffffff;"></div>
<div style="left:41px;top:177px;width:1px;height:1px;background:#000000;"></div>
<div style="left:26px;top:178px;width:1px;height:1px;background:#000000;"></div>
<div style="left:27px;top:178px;width:1px;height:1px;background:#ffffff;"></div>
<div style="left:28px;top:178px;width:13px;height:1px;background:#ccccff;"></div>
<div style="left:41px;top:178px;width:1px;height:1px;background:#000000;"></div>
<div style="left:26px;top:179px;width:1px;height:1px;background:#000000;"></div>
<div style="left:27px;top:179px;width:1px;height:1px;background:#ffffff;"></div>
<div style="left:28px;top:179px;width:13px;height:1px;background:#ccccff;"></div>
<div style="left:41px;top:179px;width:1px;height:1px;background:#000000;"></div>
<div style="left:26px;top:180px;width:1px;height:1px;background:#000000;"></div>
<div style="left:27px;top:180px;width:1px;height:1px;background:#ffffff;"></div>
<div style="left:28px;top:180px;width:13px;height:1px;background:#ccccff;"></div>
<div style="left:41px;top:180px;width:1px;height:1px;background:#000000;"></div>
<div style="left:26px;top:181px;width:1px;height:1px;background:#000000;"></div>
<div style="left:27px;top:181px;width:1px;height:1px;background:#ffffff;"></div>
<div style="left:28px;top:181px;width:13px;height:1px;background:#ccccff;"></div>
<div style="left:41px;top:181px;width:1px;height:1px;background:#000000;"></div>
<div style="left:26px;top:182px;width:1px;height:1px;background:#000000;"></div>
<div style="left:27px;top:182px;width:1px;height:1px;background:#ffffff;"></div>
<div style="left:28px;top:182px;width:13px;height:1px;background:#ccccff;"></div>
<div style="left:41px;top:182px;width:1px;height:1px;background:#000000;"></div>
<div style="left:26px;top:183px;width:1px;height:1px;background:#000000;"></div>
<div style="left:27px;top:183px;width:1px;height:1px;background:#ffffff;"></div>
<div style="left:28px;top:183px;width:13px;height:1px;background:#ccccff;"></div>
<div style="left:41px;top:183px;width:1px;height:1px;background:#000000;"></div>
<div style="left:26px;top:184px;width:1px;height:1px;background:#000000;"></div>
<div style="left:27px;top:184px;width:1px;height:1px;background:#ffffff;"></div>
<div style="left:28px;top:184px;width:13px;height:1px;background:#ccccff;"></div>
<div style="left:41px;top:184px;width:1px;height:1px;background:#000000;"></div>
<div style="left:26px;top:185px;width:16px;height:1px;background:#000000;"></div>
<div class="t" style="left:46px;top:171px;font:12px 'Liberation Sans', sans-serif;line-height:20px;color:#000;letter-spacing:-0.334px;">f</div>
<div style="left:12px;top:193px;width:4px;height:1px;background:#000000;"></div>
<div style="left:11px;top:194px;width:1px;height:1px;background:#000000;"></div>
<div style="left:12px;top:194px;width:4px;height:1px;background:#b4b4e4;"></div>
<div style="left:16px;top:194px;width:1px;height:1px;background:#000000;"></div>
<div style="left:10px;top:195px;width:1px;height:1px;background:#000000;"></div>
<div style="left:11px;top:195px;width:2px;height:1px;background:#b4b4e4;"></div>
<div style="left:13px;top:195px;width:2px;height:1px;background:#e4e4ff;"></div>
<div style="left:15px;top:195px;width:2px;height:1px;background:#b4b4e4;"></div>
<div style="left:17px;top:195px;width:1px;height:1px;background:#000000;"></div>
<div style="left:10px;top:196px;width:1px;height:1px;background:#000000;"></div>
<div style="left:11px;top:196px;width:1px;height:1px;background:#b4b4e4;"></div>
<div style="left:12px;top:196px;width:1px;height:1px;background:#e4e4ff;"></div>
<div style="left:13px;top:196px;width:2px;height:1px;background:#000000;"></div>
<div style="left:15px;top:196px;width:1px;height:1px;background:#e4e4ff;"></div>
<div style="left:16px;top:196px;width:1px;height:1px;background:#b4b4e4;"></div>
<div style="left:17px;top:196px;width:5px;height:1px;background:#000000;"></div>
<div style="left:10px;top:197px;width:1px;height:1px;background:#000000;"></div>
<div style="left:11px;top:197px;width:1px;height:1px;background:#b4b4e4;"></div>
<div style="left:12px;top:197px;width:1px;height:1px;background:#e4e4ff;"></div>
<div style="left:13px;top:197px;width:2px;height:1px;background:#000000;"></div>
<div style="left:15px;top:197px;width:1px;height:1px;background:#e4e4ff;"></div>
<div style="left:16px;top:197px;width:1px;height:1px;background:#b4b4e4;"></div>
<div style="left:17px;top:197px;width:5px;height:1px;background:#000000;"></div>
<div style="left:10px;top:198px;width:1px;height:1px;background:#000000;"></div>
<div style="left:11px;top:198px;width:2px;height:1px;background:#b4b4e4;"></div>
<div style="left:13px;top:198px;width:2px;height:1px;background:#e4e4ff;"></div>
<div style="left:15px;top:198px;width:2px;height:1px;background:#b4b4e4;"></div>
<div style="left:17px;top:198px;width:1px;height:1px;background:#000000;"></div>
<div style="left:11px;top:199px;width:1px;height:1px;background:#000000;"></div>
<div style="left:12px;top:199px;width:4px;height:1px;background:#b4b4e4;"></div>
<div style="left:16px;top:199px;width:1px;height:1px;background:#000000;"></div>
<div style="left:12px;top:200px;width:4px;height:1px;background:#000000;"></div>
<div style="left:36px;top:191px;width:6px;height:1px;background:#666699;"></div>
<div style="left:35px;top:192px;width:7px;height:1px;background:#666699;"></div>
<div style="left:27px;top:193px;width:8px;height:1px;background:#000000;"></div>
<div style="left:35px;top:193px;width:6px;height:1px;background:#9999cc;"></div>
<div style="left:26px;top:194px;width:1px;height:1px;background:#000000;"></div>
<div style="left:27px;top:194px;width:8px;height:1px;background:#ffffff;"></div>
<div style="left:35px;top:194px;width:7px;height:1px;background:#000000;"></div>
<div style="left:26px;top:195px;width:1px;height:1px;background:#000000;"></div>
<div style="left:27px;top:195px;width:1px;height:1px;background:#ffffff;"></div>
<div style="left:28px;top:195px;width:7px;height:1px;background:#ccccff;"></div>
<div style="left:35px;top:195px;width:6px;height:1px;background:#ffffff;"></div>
<div style="left:41px;top:195px;width:1px;height:1px;background:#000000;"></div>
<div style="left:26px;top:196px;width:1px;height:1px;background:#000000;"></div>
<div style="left:27px;top:196px;width:1px;height:1px;background:#ffffff;"></div>
<div style="left:28px;top:196px;width:13px;height:1px;background:#ccccff;"></div>
<div style="left:41px;top:196px;width:1px;height:1px;background:#000000;"></div>
<div style="left:26px;top:197px;width:1px;height:1px;background:#000000;"></div>
<div style="left:27px;top:197px;width:1px;height:1px;background:#ffffff;"></div>
<div style="left:28px;top:197px;width:13px;height:1px;background:#ccccff;"></div>
<div style="left:41px;top:197px;width:1px;height:1px;background:#000000;"></div>
<div style="left:26px;top:198px;width:1px;height:1px;background:#000000;"></div>
<div style="left:27px;top:198px;width:1px;height:1px;background:#ffffff;"></div>
<div style="left:28px;top:198px;width:13px;height:1px;background:#ccccff;"></div>
<div style="left:41px;top:198px;width:1px;height:1px;background:#000000;"></div>
<div style="left:26px;top:199px;width:1px;height:1px;background:#000000;"></div>
<div style="left:27px;top:199px;width:1px;height:1px;background:#ffffff;"></div>
<div style="left:28px;top:199px;width:13px;height:1px;background:#ccccff;"></div>
<div style="left:41px;top:199px;width:1px;height:1px;background:#000000;"></div>
<div style="left:26px;top:200px;width:1px;height:1px;background:#000000;"></div>
<div style="left:27px;top:200px;width:1px;height:1px;background:#ffffff;"></div>
<div style="left:28px;top:200px;width:13px;height:1px;background:#ccccff;"></div>
<div style="left:41px;top:200px;width:1px;height:1px;background:#000000;"></div>
<div style="left:26px;top:201px;width:1px;height:1px;background:#000000;"></div>
<div style="left:27px;top:201px;width:1px;height:1px;background:#ffffff;"></div>
<div style="left:28px;top:201px;width:13px;height:1px;background:#ccccff;"></div>
<div style="left:41px;top:201px;width:1px;height:1px;background:#000000;"></div>
<div style="left:26px;top:202px;width:1px;height:1px;background:#000000;"></div>
<div style="left:27px;top:202px;width:1px;height:1px;background:#ffffff;"></div>
<div style="left:28px;top:202px;width:13px;height:1px;background:#ccccff;"></div>
<div style="left:41px;top:202px;width:1px;height:1px;background:#000000;"></div>
<div style="left:26px;top:203px;width:16px;height:1px;background:#000000;"></div>
<div class="t" style="left:46px;top:189px;font:12px 'Liberation Sans', sans-serif;line-height:20px;color:#000;letter-spacing:0.130px;">taxi1</div>
<div style="left:12px;top:211px;width:4px;height:1px;background:#000000;"></div>
<div style="left:11px;top:212px;width:1px;height:1px;background:#000000;"></div>
<div style="left:12px;top:212px;width:4px;height:1px;background:#b4b4e4;"></div>
<div style="left:16px;top:212px;width:1px;height:1px;background:#000000;"></div>
<div style="left:10px;top:213px;width:1px;height:1px;background:#000000;"></div>
<div style="left:11px;top:213px;width:2px;height:1px;background:#b4b4e4;"></div>
<div style="left:13px;top:213px;width:2px;height:1px;background:#e4e4ff;"></div>
<div style="left:15px;top:213px;width:2px;height:1px;background:#b4b4e4;"></div>
<div style="left:17px;top:213px;width:1px;height:1px;background:#000000;"></div>
<div style="left:10px;top:214px;width:1px;height:1px;background:#000000;"></div>
<div style="left:11px;top:214px;width:1px;height:1px;background:#b4b4e4;"></div>
<div style="left:12px;top:214px;width:1px;height:1px;background:#e4e4ff;"></div>
<div style="left:13px;top:214px;width:2px;height:1px;background:#000000;"></div>
<div style="left:15px;top:214px;width:1px;height:1px;background:#e4e4ff;"></div>
<div style="left:16px;top:214px;width:1px;height:1px;background:#b4b4e4;"></div>
<div style="left:17px;top:214px;width:5px;height:1px;background:#000000;"></div>
<div style="left:10px;top:215px;width:1px;height:1px;background:#000000;"></div>
<div style="left:11px;top:215px;width:1px;height:1px;background:#b4b4e4;"></div>
<div style="left:12px;top:215px;width:1px;height:1px;background:#e4e4ff;"></div>
<div style="left:13px;top:215px;width:2px;height:1px;background:#000000;"></div>
<div style="left:15px;top:215px;width:1px;height:1px;background:#e4e4ff;"></div>
<div style="left:16px;top:215px;width:1px;height:1px;background:#b4b4e4;"></div>
<div style="left:17px;top:215px;width:5px;height:1px;background:#000000;"></div>
<div style="left:10px;top:216px;width:1px;height:1px;background:#000000;"></div>
<div style="left:11px;top:216px;width:2px;height:1px;background:#b4b4e4;"></div>
<div style="left:13px;top:216px;width:2px;height:1px;background:#e4e4ff;"></div>
<div style="left:15px;top:216px;width:2px;height:1px;background:#b4b4e4;"></div>
<div style="left:17px;top:216px;width:1px;height:1px;background:#000000;"></div>
<div style="left:11px;top:217px;width:1px;height:1px;background:#000000;"></div>
<div style="left:12px;top:217px;width:4px;height:1px;background:#b4b4e4;"></div>
<div style="left:16px;top:217px;width:1px;height:1px;background:#000000;"></div>
<div style="left:12px;top:218px;width:4px;height:1px;background:#000000;"></div>
<div style="left:36px;top:209px;width:6px;height:1px;background:#666699;"></div>
<div style="left:35px;top:210px;width:7px;height:1px;background:#666699;"></div>
<div style="left:27px;top:211px;width:8px;height:1px;background:#000000;"></div>
<div style="left:35px;top:211px;width:6px;height:1px;background:#9999cc;"></div>
<div style="left:26px;top:212px;width:1px;height:1px;background:#000000;"></div>
<div style="left:27px;top:212px;width:8px;height:1px;background:#ffffff;"></div>
<div style="left:35px;top:212px;width:7px;height:1px;background:#000000;"></div>
<div style="left:26px;top:213px;width:1px;height:1px;background:#000000;"></div>
<div style="left:27px;top:213px;width:1px;height:1px;background:#ffffff;"></div>
<div style="left:28px;top:213px;width:7px;height:1px;background:#ccccff;"></div>
<div style="left:35px;top:213px;width:6px;height:1px;background:#ffffff;"></div>
<div style="left:41px;top:213px;width:1px;height:1px;background:#000000;"></div>
<div style="left:26px;top:214px;width:1px;height:1px;background:#000000;"></div>
<div style="left:27px;top:214px;width:1px;height:1px;background:#ffffff;"></div>
<div style="left:28px;top:214px;width:13px;height:1px;background:#ccccff;"></div>
<div style="left:41px;top:214px;width:1px;height:1px;background:#000000;"></div>
<div style="left:26px;top:215px;width:1px;height:1px;background:#000000;"></div>
<div style="left:27px;top:215px;width:1px;height:1px;background:#ffffff;"></div>
<div style="left:28px;top:215px;width:13px;height:1px;background:#ccccff;"></div>
<div style="left:41px;top:215px;width:1px;height:1px;background:#000000;"></div>
<div style="left:26px;top:216px;width:1px;height:1px;background:#000000;"></div>
<div style="left:27px;top:216px;width:1px;height:1px;background:#ffffff;"></div>
<div style="left:28px;top:216px;width:13px;height:1px;background:#ccccff;"></div>
<div style="left:41px;top:216px;width:1px;height:1px;background:#000000;"></div>
<div style="left:26px;top:217px;width:1px;height:1px;background:#000000;"></div>
<div style="left:27px;top:217px;width:1px;height:1px;background:#ffffff;"></div>
<div style="left:28px;top:217px;width:13px;height:1px;background:#ccccff;"></div>
<div style="left:41px;top:217px;width:1px;height:1px;background:#000000;"></div>
<div style="left:26px;top:218px;width:1px;height:1px;background:#000000;"></div>
<div style="left:27px;top:218px;width:1px;height:1px;background:#ffffff;"></div>
<div style="left:28px;top:218px;width:13px;height:1px;background:#ccccff;"></div>
<div style="left:41px;top:218px;width:1px;height:1px;background:#000000;"></div>
<div style="left:26px;top:219px;width:1px;height:1px;background:#000000;"></div>
<div style="left:27px;top:219px;width:1px;height:1px;background:#ffffff;"></div>
<div style="left:28px;top:219px;width:13px;height:1px;background:#ccccff;"></div>
<div style="left:41px;top:219px;width:1px;height:1px;background:#000000;"></div>
<div style="left:26px;top:220px;width:1px;height:1px;background:#000000;"></div>
<div style="left:27px;top:220px;width:1px;height:1px;background:#ffffff;"></div>
<div style="left:28px;top:220px;width:13px;height:1px;background:#ccccff;"></div>
<div style="left:41px;top:220px;width:1px;height:1px;background:#000000;"></div>
<div style="left:26px;top:221px;width:16px;height:1px;background:#000000;"></div>
<div class="t" style="left:46px;top:207px;font:12px 'Liberation Sans', sans-serif;line-height:20px;color:#000;letter-spacing:0.130px;">taxi2</div>
<div style="left:12px;top:229px;width:4px;height:1px;background:#000000;"></div>
<div style="left:11px;top:230px;width:1px;height:1px;background:#000000;"></div>
<div style="left:12px;top:230px;width:4px;height:1px;background:#b4b4e4;"></div>
<div style="left:16px;top:230px;width:1px;height:1px;background:#000000;"></div>
<div style="left:10px;top:231px;width:1px;height:1px;background:#000000;"></div>
<div style="left:11px;top:231px;width:2px;height:1px;background:#b4b4e4;"></div>
<div style="left:13px;top:231px;width:2px;height:1px;background:#e4e4ff;"></div>
<div style="left:15px;top:231px;width:2px;height:1px;background:#b4b4e4;"></div>
<div style="left:17px;top:231px;width:1px;height:1px;background:#000000;"></div>
<div style="left:10px;top:232px;width:1px;height:1px;background:#000000;"></div>
<div style="left:11px;top:232px;width:1px;height:1px;background:#b4b4e4;"></div>
<div style="left:12px;top:232px;width:1px;height:1px;background:#e4e4ff;"></div>
<div style="left:13px;top:232px;width:2px;height:1px;background:#000000;"></div>
<div style="left:15px;top:232px;width:1px;height:1px;background:#e4e4ff;"></div>
<div style="left:16px;top:232px;width:1px;height:1px;background:#b4b4e4;"></div>
<div style="left:17px;top:232px;width:5px;height:1px;background:#000000;"></div>
<div style="left:10px;top:233px;width:1px;height:1px;background:#000000;"></div>
<div style="left:11px;top:233px;width:1px;height:1px;background:#b4b4e4;"></div>
<div style="left:12px;top:233px;width:1px;height:1px;background:#e4e4ff;"></div>
<div style="left:13px;top:233px;width:2px;height:1px;background:#000000;"></div>
<div style="left:15px;top:233px;width:1px;height:1px;background:#e4e4ff;"></div>
<div style="left:16px;top:233px;width:1px;height:1px;background:#b4b4e4;"></div>
<div style="left:17px;top:233px;width:5px;height:1px;background:#000000;"></div>
<div style="left:10px;top:234px;width:1px;height:1px;background:#000000;"></div>
<div style="left:11px;top:234px;width:2px;height:1px;background:#b4b4e4;"></div>
<div style="left:13px;top:234px;width:2px;height:1px;background:#e4e4ff;"></div>
<div style="left:15px;top:234px;width:2px;height:1px;background:#b4b4e4;"></div>
<div style="left:17px;top:234px;width:1px;height:1px;background:#000000;"></div>
<div style="left:11px;top:235px;width:1px;height:1px;background:#000000;"></div>
<div style="left:12px;top:235px;width:4px;height:1px;background:#b4b4e4;"></div>
<div style="left:16px;top:235px;width:1px;height:1px;background:#000000;"></div>
<div style="left:12px;top:236px;width:4px;height:1px;background:#000000;"></div>
<div style="left:36px;top:227px;width:6px;height:1px;background:#666699;"></div>
<div style="left:35px;top:228px;width:7px;height:1px;background:#666699;"></div>
<div style="left:27px;top:229px;width:8px;height:1px;background:#000000;"></div>
<div style="left:35px;top:229px;width:6px;height:1px;background:#9999cc;"></div>
<div style="left:26px;top:230px;width:1px;height:1px;background:#000000;"></div>
<div style="left:27px;top:230px;width:8px;height:1px;background:#ffffff;"></div>
<div style="left:35px;top:230px;width:7px;height:1px;background:#000000;"></div>
<div style="left:26px;top:231px;width:1px;height:1px;background:#000000;"></div>
<div style="left:27px;top:231px;width:1px;height:1px;background:#ffffff;"></div>
<div style="left:28px;top:231px;width:7px;height:1px;background:#ccccff;"></div>
<div style="left:35px;top:231px;width:6px;height:1px;background:#ffffff;"></div>
<div style="left:41px;top:231px;width:1px;height:1px;background:#000000;"></div>
<div style="left:26px;top:232px;width:1px;height:1px;background:#000000;"></div>
<div style="left:27px;top:232px;width:1px;height:1px;background:#ffffff;"></div>
<div style="left:28px;top:232px;width:13px;height:1px;background:#ccccff;"></div>
<div style="left:41px;top:232px;width:1px;height:1px;background:#000000;"></div>
<div style="left:26px;top:233px;width:1px;height:1px;background:#000000;"></div>
<div style="left:27px;top:233px;width:1px;height:1px;background:#ffffff;"></div>
<div style="left:28px;top:233px;width:13px;height:1px;background:#ccccff;"></div>
<div style="left:41px;top:233px;width:1px;height:1px;background:#000000;"></div>
<div style="left:26px;top:234px;width:1px;height:1px;background:#000000;"></div>
<div style="left:27px;top:234px;width:1px;height:1px;background:#ffffff;"></div>
<div style="left:28px;top:234px;width:13px;height:1px;background:#ccccff;"></div>
<div style="left:41px;top:234px;width:1px;height:1px;background:#000000;"></div>
<div style="left:26px;top:235px;width:1px;height:1px;background:#000000;"></div>
<div style="left:27px;top:235px;width:1px;height:1px;background:#ffffff;"></div>
<div style="left:28px;top:235px;width:13px;height:1px;background:#ccccff;"></div>
<div style="left:41px;top:235px;width:1px;height:1px;background:#000000;"></div>
<div style="left:26px;top:236px;width:1px;height:1px;background:#000000;"></div>
<div style="left:27px;top:236px;width:1px;height:1px;background:#ffffff;"></div>
<div style="left:28px;top:236px;width:13px;height:1px;background:#ccccff;"></div>
<div style="left:41px;top:236px;width:1px;height:1px;background:#000000;"></div>
<div style="left:26px;top:237px;width:1px;height:1px;background:#000000;"></div>
<div style="left:27px;top:237px;width:1px;height:1px;background:#ffffff;"></div>
<div style="left:28px;top:237px;width:13px;height:1px;background:#ccccff;"></div>
<div style="left:41px;top:237px;width:1px;height:1px;background:#000000;"></div>
<div style="left:26px;top:238px;width:1px;height:1px;background:#000000;"></div>
<div style="left:27px;top:238px;width:1px;height:1px;background:#ffffff;"></div>
<div style="left:28px;top:238px;width:13px;height:1px;background:#ccccff;"></div>
<div style="left:41px;top:238px;width:1px;height:1px;background:#000000;"></div>
<div style="left:26px;top:239px;width:16px;height:1px;background:#000000;"></div>
<div class="t" style="left:46px;top:225px;font:12px 'Liberation Sans', sans-serif;line-height:20px;color:#000;letter-spacing:0.130px;">taxi3</div>
<div style="left:161px;top:94px;width:8px;height:317px;background:#cccccc;"></div>
<svg style="position:absolute;left:163px;top:120px" width="4" height="288" shape-rendering="crispEdges">
<defs><pattern id="p2" x="0" y="0" width="4" height="4" patternUnits="userSpaceOnUse">
<rect width="4" height="4" fill="#cccccc"/>
<rect x="0" y="0" width="1" height="1" fill="#ffffff"/><rect x="2" y="2" width="1" height="1" fill="#ffffff"/>
<rect x="1" y="1" width="1" height="1" fill="#666666"/><rect x="3" y="3" width="1" height="1" fill="#666666"/>
</pattern></defs><rect width="4" height="288" fill="url(#p2)"/></svg>
<div style="left:165px;top:96px;width:1px;height:1px;background:#000;"></div>
<div style="left:166px;top:96px;width:1px;height:1px;background:#ffffff;"></div>
<div style="left:164px;top:97px;width:1px;height:1px;background:#000;"></div>
<div style="left:165px;top:97px;width:1px;height:1px;background:#7c7cb0;"></div>
<div style="left:166px;top:97px;width:1px;height:1px;background:#ffffff;"></div>
<div style="left:163px;top:98px;width:1px;height:1px;background:#000;"></div>
<div style="left:164px;top:98px;width:2px;height:1px;background:#7c7cb0;"></div>
<div style="left:166px;top:98px;width:1px;height:1px;background:#ffffff;"></div>
<div style="left:162px;top:99px;width:1px;height:1px;background:#000;"></div>
<div style="left:163px;top:99px;width:3px;height:1px;background:#7c7cb0;"></div>
<div style="left:166px;top:99px;width:1px;height:1px;background:#ffffff;"></div>
<div style="left:161px;top:100px;width:1px;height:1px;background:#000;"></div>
<div style="left:162px;top:100px;width:4px;height:1px;background:#7c7cb0;"></div>
<div style="left:166px;top:100px;width:1px;height:1px;background:#ffffff;"></div>
<div style="left:161px;top:101px;width:1px;height:1px;background:#000;"></div>
<div style="left:162px;top:101px;width:4px;height:1px;background:#7c7cb0;"></div>
<div style="left:166px;top:101px;width:1px;height:1px;background:#ffffff;"></div>
<div style="left:162px;top:102px;width:1px;height:1px;background:#000;"></div>
<div style="left:163px;top:102px;width:3px;height:1px;background:#7c7cb0;"></div>
<div style="left:166px;top:102px;width:1px;height:1px;background:#ffffff;"></div>
<div style="left:163px;top:103px;width:1px;height:1px;background:#000;"></div>
<div style="left:164px;top:103px;width:2px;height:1px;background:#7c7cb0;"></div>
<div style="left:166px;top:103px;width:1px;height:1px;background:#ffffff;"></div>
<div style="left:164px;top:104px;width:1px;height:1px;background:#000;"></div>
<div style="left:165px;top:104px;width:1px;height:1px;background:#7c7cb0;"></div>
<div style="left:166px;top:104px;width:1px;height:1px;background:#ffffff;"></div>
<div style="left:165px;top:105px;width:1px;height:1px;background:#000;"></div>
<div style="left:166px;top:105px;width:1px;height:1px;background:#ffffff;"></div>
<div style="left:161px;top:108px;width:1px;height:1px;background:#000;"></div>
<div style="left:161px;top:109px;width:1px;height:1px;background:#000;"></div>
<div style="left:162px;top:109px;width:1px;height:1px;background:#7c7cb0;"></div>
<div style="left:161px;top:110px;width:1px;height:1px;background:#000;"></div>
<div style="left:162px;top:110px;width:2px;height:1px;background:#7c7cb0;"></div>
<div style="left:161px;top:111px;width:1px;height:1px;background:#000;"></div>
<div style="left:162px;top:111px;width:3px;height:1px;background:#7c7cb0;"></div>
<div style="left:161px;top:112px;width:1px;height:1px;background:#000;"></div>
<div style="left:162px;top:112px;width:3px;height:1px;background:#7c7cb0;"></div>
<div style="left:165px;top:112px;width:1px;height:1px;background:#ffffff;"></div>
<div style="left:161px;top:113px;width:1px;height:1px;background:#000;"></div>
<div style="left:162px;top:113px;width:2px;height:1px;background:#7c7cb0;"></div>
<div style="left:164px;top:113px;width:1px;height:1px;background:#ffffff;"></div>
<div style="left:161px;top:114px;width:1px;height:1px;background:#000;"></div>
<div style="left:162px;top:114px;width:1px;height:1px;background:#7c7cb0;"></div>
<div style="left:163px;top:114px;width:1px;height:1px;background:#ffffff;"></div>
<div style="left:161px;top:115px;width:1px;height:1px;background:#000;"></div>
<div style="left:162px;top:115px;width:1px;height:1px;background:#ffffff;"></div>
<div style="left:161px;top:116px;width:1px;height:1px;background:#ffffff;"></div>
<div style="left:169px;top:92px;width:1px;height:319px;background:#666666;"></div>
<div style="left:170px;top:94px;width:1px;height:317px;background:#dedede;"></div>
<div style="left:172px;top:102px;width:619px;height:1px;background:#999999;"></div>
<div style="left:172px;top:407px;width:619px;height:1px;background:#999999;"></div>
<div style="left:172px;top:102px;width:1px;height:306px;background:#999999;"></div>
<div style="left:790px;top:102px;width:1px;height:306px;background:#999999;"></div>
<div style="left:173px;top:103px;width:617px;height:1px;background:#ececec;"></div>
<div style="left:173px;top:103px;width:1px;height:304px;background:#ececec;"></div>
<div style="left:172px;top:408px;width:620px;height:1px;background:#e0e0e0;"></div>
<div style="left:791px;top:102px;width:1px;height:307px;background:#e0e0e0;"></div>
<div style="left:175px;top:95px;width:78px;height:14px;background:#cccccc;"></div>
<div class="t" style="left:177px;top:93px;font:bold 12px 'Liberation Sans', sans-serif;line-height:20px;color:#000;letter-spacing:0.022px;">Internal state</div>
<div style="left:181px;top:121px;width:583px;height:260px;background:#ffffff;"></div>
<div style="left:180px;top:120px;width:602px;height:1px;background:#666666;"></div>
<div style="left:180px;top:398px;width:602px;height:1px;background:#666666;"></div>
<div style="left:180px;top:120px;width:1px;height:279px;background:#666666;"></div>
<div style="left:781px;top:120px;width:1px;height:279px;background:#666666;"></div>
<div style="left:782px;top:120px;width:1px;height:280px;background:#ffffff;"></div>
<div style="left:180px;top:399px;width:603px;height:1px;background:#ffffff;"></div>
<div class="crisp" style="left:181px;top:121px;width:583px;height:260px;overflow:hidden"><div style="left:3px;top:-11px;font:11px 'Liberation Mono', monospace;transform:scaleX(1.0606);transform-origin:0 0;line-height:14px;white-space:pre;color:#000"><div style="position:static">&lt;c110&gt;     h(current_time,8)</div><div style="position:static">&lt;c108&gt;     h(tell(taxi2,f,bid(taxi2station,5),auction1),8)</div><div style="position:static">&lt;c106&gt;     h(current_time,7)</div><div style="position:static">&lt;c53&gt;     h(tell(taxi1,f,bid(taxi2station,3),auction1),7)</div><div style="position:static">&lt;c51&gt;     h(current_time,6)</div><div style="position:static">&lt;c38&gt;     h(tell(f,taxi3,openauction(taxi2station,10,20),auction1),5)</div><div style="position:static">&lt;c25&gt;     h(tell(f,taxi2,openauction(taxi2station,10,20),auction1),5)</div><div style="position:static">&lt;c12&gt;     h(tell(f,taxi1,openauction(taxi2station,10,20),auction1),5)</div><div style="position:static">&lt;c10&gt;     h(current_time,4)</div><div style="position:static;color:#149614;font-weight:bold">&lt;c581&gt;     fulf(e(tell(f,taxi3,openauction(taxi2station,10,20),auction1),5))</div><div style="position:static;color:#149614;font-weight:bold">&lt;c427&gt;     fulf(e(tell(f,taxi2,openauction(taxi2station,10,20),auction1),5))</div><div style="position:static;color:#149614;font-weight:bold">&lt;c105&gt;     fulf(e(tell(f,taxi1,openauction(taxi2station,10,20),auction1),5))</div><div style="position:static;color:#1a1a96">&lt;c542&gt;     pending(e(tell(f,taxi3,answer(lose,taxi2station,7),auction1),_43030)),</div><div style="position:static;color:#1a1a96">_43030 &gt;= 11, _43030 &lt;= 20</div><div style="position:static;color:#1a1a96">&lt;c388&gt;     pending(e(tell(f,taxi2,answer(lose,taxi2station,5),auction1),_26347)),</div><div style="position:static;color:#1a1a96">_26347 &gt;= 11, _26347 &lt;= 20</div><div style="position:static;color:#1a1a96">&lt;c66&gt;     pending(e(tell(f,taxi1,answer(win,taxi2station,3),auction1),_16076)),</div><div style="position:static;color:#1a1a96">_16076 &gt;= 11, _16076 &lt;= 20</div></div></div>
<div style="left:764px;top:121px;width:17px;height:260px;background:#cccccc;"></div>
<div style="left:764px;top:121px;width:17px;height:16px;background:#cccccc;"></div>
<div style="left:764px;top:121px;width:1px;height:16px;background:#666666;"></div>
<div style="left:779px;top:121px;width:1px;height:16px;background:#666666;"></div>
<div style="left:780px;top:121px;width:1px;height:16px;background:#ffffff;"></div>
<div style="left:764px;top:121px;width:16px;height:1px;background:#666666;"></div>
<div style="left:765px;top:122px;width:14px;height:1px;background:#ffffff;"></div>
<div style="left:765px;top:122px;width:1px;height:14px;background:#ffffff;"></div>
<div style="left:764px;top:136px;width:16px;height:1px;background:#666666;"></div>
<div style="left:772px;top:127px;width:2px;height:1px;background:#000000;"></div>
<div style="left:771px;top:128px;width:4px;height:1px;background:#000000;"></div>
<div style="left:770px;top:129px;width:6px;height:1px;background:#000000;"></div>
<div style="left:769px;top:130px;width:8px;height:1px;background:#000000;"></div>
<div style="left:764px;top:137px;width:1px;height:228px;background:#666666;"></div>
<div style="left:779px;top:137px;width:1px;height:228px;background:#666666;"></div>
<div style="left:780px;top:137px;width:1px;height:228px;background:#ffffff;"></div>
<div style="left:765px;top:137px;width:1px;height:228px;background:#999999;"></div>
<div style="left:765px;top:137px;width:14px;height:1px;background:#999999;"></div>
<div style="left:764px;top:160px;width:16px;height:205px;background:#9999cc;"></div>
<div style="left:764px;top:160px;width:16px;height:1px;background:#666699;"></div>
<div style="left:764px;top:364px;width:16px;height:1px;background:#666699;"></div>
<div style="left:764px;top:160px;width:1px;height:205px;background:#666699;"></div>
<div style="left:779px;top:160px;width:1px;height:205px;background:#666699;"></div>
<div style="left:765px;top:161px;width:14px;height:1px;background:#ccccff;"></div>
<div style="left:765px;top:161px;width:1px;height:203px;background:#ccccff;"></div>
<svg style="position:absolute;left:767px;top:164px" width="10" height="197" shape-rendering="crispEdges">
<defs><pattern id="p3" x="0" y="0" width="4" height="4" patternUnits="userSpaceOnUse">
<rect width="4" height="4" fill="#9999cc"/>
<rect x="0" y="0" width="1" height="1" fill="#ccccff"/><rect x="2" y="2" width="1" height="1" fill="#ccccff"/>
<rect x="1" y="1" width="1" height="1" fill="#666699"/><rect x="3" y="3" width="1" height="1" fill="#666699"/>
</pattern></defs><rect width="10" height="197" fill="url(#p3)"/></svg>
<div style="left:764px;top:365px;width:17px;height:16px;background:#cccccc;"></div>
<div style="left:764px;top:365px;width:1px;height:16px;background:#666666;"></div>
<div style="left:779px;top:365px;width:1px;height:16px;background:#666666;"></div>
<div style="left:780px;top:365px;width:1px;height:16px;background:#ffffff;"></div>
<div style="left:765px;top:365px;width:14px;height:1px;background:#ffffff;"></div>
<div style="left:765px;top:365px;width:1px;height:15px;background:#ffffff;"></div>
<div style="left:764px;top:380px;width:16px;height:1px;background:#666666;"></div>
<div style="left:769px;top:370px;width:8px;height:1px;background:#000000;"></div>
<div style="left:770px;top:371px;width:6px;height:1px;background:#000000;"></div>
<div style="left:771px;top:372px;width:4px;height:1px;background:#000000;"></div>
<div style="left:772px;top:373px;width:2px;height:1px;background:#000000;"></div>
<div style="left:181px;top:381px;width:583px;height:17px;background:#cccccc;"></div>
<div style="left:181px;top:381px;width:583px;height:1px;background:#666666;"></div>
<div style="left:181px;top:396px;width:583px;height:1px;background:#666666;"></div>
<div style="left:181px;top:397px;width:583px;height:1px;background:#ffffff;"></div>
<div style="left:182px;top:382px;width:581px;height:1px;background:#999999;"></div>
<div style="left:181px;top:381px;width:16px;height:17px;background:#cccccc;"></div>
<div style="left:181px;top:381px;width:16px;height:1px;background:#666666;"></div>
<div style="left:181px;top:396px;width:16px;height:1px;background:#666666;"></div>
<div style="left:181px;top:397px;width:16px;height:1px;background:#ffffff;"></div>
<div style="left:181px;top:381px;width:1px;height:16px;background:#666666;"></div>
<div style="left:182px;top:382px;width:1px;height:14px;background:#ffffff;"></div>
<div style="left:182px;top:382px;width:14px;height:1px;background:#ffffff;"></div>
<div style="left:196px;top:381px;width:1px;height:16px;background:#666666;"></div>
<div style="left:190px;top:386px;width:1px;height:1px;background:#000000;"></div>
<div style="left:189px;top:387px;width:2px;height:1px;background:#000000;"></div>
<div style="left:188px;top:388px;width:3px;height:1px;background:#000000;"></div>
<div style="left:187px;top:389px;width:4px;height:1px;background:#000000;"></div>
<div style="left:187px;top:390px;width:4px;height:1px;background:#000000;"></div>
<div style="left:188px;top:391px;width:3px;height:1px;background:#000000;"></div>
<div style="left:189px;top:392px;width:2px;height:1px;background:#000000;"></div>
<div style="left:190px;top:393px;width:1px;height:1px;background:#000000;"></div>
<div style="left:748px;top:381px;width:16px;height:17px;background:#cccccc;"></div>
<div style="left:748px;top:381px;width:16px;height:1px;background:#666666;"></div>
<div style="left:748px;top:396px;width:16px;height:1px;background:#666666;"></div>
<div style="left:748px;top:397px;width:16px;height:1px;background:#ffffff;"></div>
<div style="left:748px;top:382px;width:15px;height:1px;background:#ffffff;"></div>
<div style="left:748px;top:382px;width:1px;height:14px;background:#ffffff;"></div>
<div style="left:763px;top:381px;width:1px;height:16px;background:#666666;"></div>
<div style="left:754px;top:386px;width:1px;height:1px;background:#000000;"></div>
<div style="left:754px;top:387px;width:2px;height:1px;background:#000000;"></div>
<div style="left:754px;top:388px;width:3px;height:1px;background:#000000;"></div>
<div style="left:754px;top:389px;width:4px;height:1px;background:#000000;"></div>
<div style="left:754px;top:390px;width:4px;height:1px;background:#000000;"></div>
<div style="left:754px;top:391px;width:3px;height:1px;background:#000000;"></div>
<div style="left:754px;top:392px;width:2px;height:1px;background:#000000;"></div>
<div style="left:754px;top:393px;width:1px;height:1px;background:#000000;"></div>
<div style="left:764px;top:381px;width:17px;height:17px;background:#cccccc;"></div>
<div style="left:5px;top:412px;width:788px;height:8px;background:#cccccc;"></div>
<div style="left:3px;top:411px;width:792px;height:1px;background:#ffffff;"></div>
<div style="left:10px;top:413px;width:2px;height:1px;background:#000;"></div>
<div style="left:9px;top:414px;width:1px;height:1px;background:#000;"></div>
<div style="left:10px;top:414px;width:3px;height:1px;background:#7c7cb0;"></div>
<div style="left:8px;top:415px;width:1px;height:1px;background:#000;"></div>
<div style="left:9px;top:415px;width:5px;height:1px;background:#7c7cb0;"></div>
<div style="left:7px;top:416px;width:1px;height:1px;background:#000;"></div>
<div style="left:8px;top:416px;width:7px;height:1px;background:#7c7cb0;"></div>
<div style="left:8px;top:417px;width:8px;height:1px;background:#ffffff;"></div>
<div style="left:19px;top:413px;width:8px;height:1px;background:#000;"></div>
<div style="left:20px;top:414px;width:6px;height:1px;background:#7c7cb0;"></div>
<div style="left:26px;top:414px;width:1px;height:1px;background:#ffffff;"></div>
<div style="left:21px;top:415px;width:4px;height:1px;background:#7c7cb0;"></div>
<div style="left:25px;top:415px;width:1px;height:1px;background:#ffffff;"></div>
<div style="left:22px;top:416px;width:2px;height:1px;background:#7c7cb0;"></div>
<div style="left:24px;top:416px;width:1px;height:1px;background:#ffffff;"></div>
<div style="left:23px;top:417px;width:1px;height:1px;background:#ffffff;"></div>
<svg style="position:absolute;left:31px;top:414px" width="760" height="4" shape-rendering="crispEdges">
<defs><pattern id="p4" x="-1" y="0" width="4" height="4" patternUnits="userSpaceOnUse">
<rect width="4" height="4" fill="#cccccc"/>
<rect x="0" y="0" width="1" height="1" fill="#ffffff"/><rect x="2" y="2" width="1" height="1" fill="#ffffff"/>
<rect x="1" y="1" width="1" height="1" fill="#666666"/><rect x="3" y="3" width="1" height="1" fill="#666666"/>
</pattern></defs><rect width="760" height="4" fill="url(#p4)"/></svg>
<div style="left:3px;top:420px;width:792px;height:1px;background:#666666;"></div>
<div style="left:6px;top:429px;width:786px;height:1px;background:#999999;"></div>
<div style="left:6px;top:693px;width:786px;height:1px;background:#999999;"></div>
<div style="left:6px;top:429px;width:1px;height:265px;background:#999999;"></div>
<div style="left:791px;top:429px;width:1px;height:265px;background:#999999;"></div>
<div style="left:7px;top:430px;width:784px;height:1px;background:#ececec;"></div>
<div style="left:7px;top:430px;width:1px;height:263px;background:#ececec;"></div>
<div style="left:6px;top:694px;width:787px;height:1px;background:#e0e0e0;"></div>
<div style="left:792px;top:429px;width:1px;height:266px;background:#e0e0e0;"></div>
<div style="left:10px;top:422px;width:43px;height:14px;background:#cccccc;"></div>
<div class="t" style="left:11px;top:420px;font:bold 12px 'Liberation Sans', sans-serif;line-height:20px;color:#000;letter-spacing:0.108px;">Events</div>
<div style="left:15px;top:448px;width:767px;height:236px;background:#cccccc;"></div>
<div style="left:14px;top:447px;width:769px;height:1px;background:#666666;"></div>
<div style="left:14px;top:684px;width:769px;height:1px;background:#666666;"></div>
<div style="left:14px;top:447px;width:1px;height:238px;background:#666666;"></div>
<div style="left:782px;top:447px;width:1px;height:238px;background:#666666;"></div>
<div style="left:783px;top:447px;width:1px;height:239px;background:#ffffff;"></div>
<div style="left:14px;top:685px;width:770px;height:1px;background:#ffffff;"></div>
<div style="left:15px;top:448px;width:96px;height:15px;background:#cccccc;"></div>
<div style="left:15px;top:448px;width:95px;height:1px;background:#ffffff;"></div>
<div style="left:15px;top:448px;width:1px;height:15px;background:#ffffff;"></div>
<div style="left:110px;top:448px;width:1px;height:15px;background:#666666;"></div>
<div class="t" style="left:15px;top:447px;font:12px 'Liberation Sans', sans-serif;line-height:20px;color:#000;letter-spacing:0.046px;width:96px;text-align:center">SocsIDs</div>
<div style="left:111px;top:448px;width:96px;height:15px;background:#cccccc;"></div>
<div style="left:111px;top:448px;width:95px;height:1px;background:#ffffff;"></div>
<div style="left:111px;top:448px;width:1px;height:15px;background:#ffffff;"></div>
<div style="left:206px;top:448px;width:1px;height:15px;background:#666666;"></div>
<div class="t" style="left:111px;top:447px;font:12px 'Liberation Sans', sans-serif;line-height:20px;color:#000;letter-spacing:0.034px;width:96px;text-align:center">contextId</div>
<div style="left:207px;top:448px;width:96px;height:15px;background:#cccccc;"></div>
<div style="left:207px;top:448px;width:95px;height:1px;background:#ffffff;"></div>
<div style="left:207px;top:448px;width:1px;height:15px;background:#ffffff;"></div>
<div style="left:302px;top:448px;width:1px;height:15px;background:#666666;"></div>
<div class="t" style="left:207px;top:447px;font:12px 'Liberation Sans', sans-serif;line-height:20px;color:#000;letter-spacing:0.217px;width:96px;text-align:center">Sender</div>
<div style="left:303px;top:448px;width:96px;height:15px;background:#cccccc;"></div>
<div style="left:303px;top:448px;width:95px;height:1px;background:#ffffff;"></div>
<div style="left:303px;top:448px;width:1px;height:15px;background:#ffffff;"></div>
<div style="left:398px;top:448px;width:1px;height:15px;background:#666666;"></div>
<div class="t" style="left:303px;top:447px;font:12px 'Liberation Sans', sans-serif;line-height:20px;color:#000;letter-spacing:0.183px;width:96px;text-align:center">Receivers</div>
<div style="left:399px;top:448px;width:96px;height:15px;background:#cccccc;"></div>
<div style="left:399px;top:448px;width:95px;height:1px;background:#ffffff;"></div>
<div style="left:399px;top:448px;width:1px;height:15px;background:#ffffff;"></div>
<div style="left:494px;top:448px;width:1px;height:15px;background:#666666;"></div>
<div class="t" style="left:399px;top:447px;font:12px 'Liberation Sans', sans-serif;line-height:20px;color:#000;letter-spacing:0.082px;width:96px;text-align:center">Performative</div>
<div style="left:495px;top:448px;width:96px;height:15px;background:#cccccc;"></div>
<div style="left:495px;top:448px;width:95px;height:1px;background:#ffffff;"></div>
<div style="left:495px;top:448px;width:1px;height:15px;background:#ffffff;"></div>
<div style="left:590px;top:448px;width:1px;height:15px;background:#666666;"></div>
<div class="t" style="left:495px;top:447px;font:12px 'Liberation Sans', sans-serif;line-height:20px;color:#000;letter-spacing:0.139px;width:96px;text-align:center">Content</div>
<div style="left:591px;top:448px;width:96px;height:15px;background:#cccccc;"></div>
<div style="left:591px;top:448px;width:95px;height:1px;background:#ffffff;"></div>
<div style="left:591px;top:448px;width:1px;height:15px;background:#ffffff;"></div>
<div style="left:686px;top:448px;width:1px;height:15px;background:#666666;"></div>
<div class="t" style="left:591px;top:447px;font:12px 'Liberation Sans', sans-serif;line-height:20px;color:#000;letter-spacing:0.083px;width:96px;text-align:center">Time</div>
<div style="left:687px;top:448px;width:96px;height:15px;background:#cccccc;"></div>
<div style="left:687px;top:448px;width:95px;height:1px;background:#ffffff;"></div>
<div style="left:687px;top:448px;width:1px;height:15px;background:#ffffff;"></div>
<div style="left:782px;top:448px;width:1px;height:15px;background:#666666;"></div>
<div class="t" style="left:687px;top:447px;font:12px 'Liberation Sans', sans-serif;line-height:20px;color:#000;letter-spacing:0.131px;width:96px;text-align:center">Local Time</div>
<div style="left:15px;top:463px;width:767px;height:1px;background:#666666;"></div>
<div style="left:15px;top:464px;width:767px;height:208px;background:#ffffff;"></div>
<div style="left:15px;top:479px;width:767px;height:1px;background:#999999;"></div>
<div class="t" style="left:401px;top:462px;font:12px 'Liberation Sans', sans-serif;line-height:20px;color:#000;width:93px;overflow:hidden;letter-spacing:0.109px;">current_time</div>
<div class="t" style="left:591px;top:462px;font:12px 'Liberation Sans', sans-serif;line-height:20px;color:#000;width:93px;text-align:right;letter-spacing:0.326px;">4</div>
<div class="t" style="left:687px;top:462px;font:12px 'Liberation Sans', sans-serif;line-height:20px;color:#000;width:93px;text-align:right;letter-spacing:0.326px;">1076431550604</div>
<div style="left:15px;top:495px;width:767px;height:1px;background:#999999;"></div>
<div class="t" style="left:17px;top:478px;font:12px 'Liberation Sans', sans-serif;line-height:20px;color:#000;width:93px;overflow:hidden;letter-spacing:0.163px;">s0</div>
<div class="t" style="left:113px;top:478px;font:12px 'Liberation Sans', sans-serif;line-height:20px;color:#000;width:93px;overflow:hidden;letter-spacing:0.204px;">auction1</div>
<div class="t" style="left:209px;top:478px;font:12px 'Liberation Sans', sans-serif;line-height:20px;color:#000;width:93px;overflow:hidden;letter-spacing:-0.334px;">f</div>
<div class="t" style="left:305px;top:478px;font:12px 'Liberation Sans', sans-serif;line-height:20px;color:#000;width:93px;overflow:hidden;letter-spacing:0.130px;">taxi1</div>
<div class="t" style="left:401px;top:478px;font:12px 'Liberation Sans', sans-serif;line-height:20px;color:#000;width:93px;overflow:hidden;letter-spacing:0.237px;">openauction</div>
<div class="t" style="left:497px;top:478px;font:12px 'Liberation Sans', sans-serif;line-height:20px;color:#000;width:93px;overflow:hidden;letter-spacing:0.015px;">taxi2station, 10...</div>
<div class="t" style="left:591px;top:478px;font:12px 'Liberation Sans', sans-serif;line-height:20px;color:#000;width:93px;text-align:right;letter-spacing:0.326px;">5</div>
<div class="t" style="left:687px;top:478px;font:12px 'Liberation Sans', sans-serif;line-height:20px;color:#000;width:93px;text-align:right;letter-spacing:0.326px;">1076431550605</div>
<div style="left:15px;top:511px;width:767px;height:1px;background:#999999;"></div>
<div class="t" style="left:17px;top:494px;font:12px 'Liberation Sans', sans-serif;line-height:20px;color:#000;width:93px;overflow:hidden;letter-spacing:0.163px;">s0</div>
<div class="t" style="left:113px;top:494px;font:12px 'Liberation Sans', sans-serif;line-height:20px;color:#000;width:93px;overflow:hidden;letter-spacing:0.204px;">auction1</div>
<div class="t" style="left:209px;top:494px;font:12px 'Liberation Sans', sans-serif;line-height:20px;color:#000;width:93px;overflow:hidden;letter-spacing:-0.334px;">f</div>
<div class="t" style="left:305px;top:494px;font:12px 'Liberation Sans', sans-serif;line-height:20px;color:#000;width:93px;overflow:hidden;letter-spacing:0.130px;">taxi2</div>
<div class="t" style="left:401px;top:494px;font:12px 'Liberation Sans', sans-serif;line-height:20px;color:#000;width:93px;overflow:hidden;letter-spacing:0.237px;">openauction</div>
<div class="t" style="left:497px;top:494px;font:12px 'Liberation Sans', sans-serif;line-height:20px;color:#000;width:93px;overflow:hidden;letter-spacing:0.015px;">taxi2station, 10...</div>
<div class="t" style="left:591px;top:494px;font:12px 'Liberation Sans', sans-serif;line-height:20px;color:#000;width:93px;text-align:right;letter-spacing:0.326px;">5</div>
<div class="t" style="left:687px;top:494px;font:12px 'Liberation Sans', sans-serif;line-height:20px;color:#000;width:93px;text-align:right;letter-spacing:0.326px;">1076431550634</div>
<div style="left:15px;top:527px;width:767px;height:1px;background:#999999;"></div>
<div class="t" style="left:17px;top:510px;font:12px 'Liberation Sans', sans-serif;line-height:20px;color:#000;width:93px;overflow:hidden;letter-spacing:0.163px;">s0</div>
<div class="t" style="left:113px;top:510px;font:12px 'Liberation Sans', sans-serif;line-height:20px;color:#000;width:93px;overflow:hidden;letter-spacing:0.204px;">auction1</div>
<div class="t" style="left:209px;top:510px;font:12px 'Liberation Sans', sans-serif;line-height:20px;color:#000;width:93px;overflow:hidden;letter-spacing:-0.334px;">f</div>
<div class="t" style="left:305px;top:510px;font:12px 'Liberation Sans', sans-serif;line-height:20px;color:#000;width:93px;overflow:hidden;letter-spacing:0.130px;">taxi3</div>
<div class="t" style="left:401px;top:510px;font:12px 'Liberation Sans', sans-serif;line-height:20px;color:#000;width:93px;overflow:hidden;letter-spacing:0.237px;">openauction</div>
<div class="t" style="left:497px;top:510px;font:12px 'Liberation Sans', sans-serif;line-height:20px;color:#000;width:93px;overflow:hidden;letter-spacing:0.015px;">taxi2station, 10...</div>
<div class="t" style="left:591px;top:510px;font:12px 'Liberation Sans', sans-serif;line-height:20px;color:#000;width:93px;text-align:right;letter-spacing:0.326px;">5</div>
<div class="t" style="left:687px;top:510px;font:12px 'Liberation Sans', sans-serif;line-height:20px;color:#000;width:93px;text-align:right;letter-spacing:0.326px;">1076431550636</div>
<div style="left:15px;top:543px;width:767px;height:1px;background:#999999;"></div>
<div class="t" style="left:401px;top:526px;font:12px 'Liberation Sans', sans-serif;line-height:20px;color:#000;width:93px;overflow:hidden;letter-spacing:0.109px;">current_time</div>
<div class="t" style="left:591px;top:526px;font:12px 'Liberation Sans', sans-serif;line-height:20px;color:#000;width:93px;text-align:right;letter-spacing:0.326px;">6</div>
<div class="t" style="left:687px;top:526px;font:12px 'Liberation Sans', sans-serif;line-height:20px;color:#000;width:93px;text-align:right;letter-spacing:0.326px;">1076431550644</div>
<div style="left:15px;top:559px;width:767px;height:1px;background:#999999;"></div>
<div class="t" style="left:17px;top:542px;font:12px 'Liberation Sans', sans-serif;line-height:20px;color:#000;width:93px;overflow:hidden;letter-spacing:0.163px;">s0</div>
<div class="t" style="left:113px;top:542px;font:12px 'Liberation Sans', sans-serif;line-height:20px;color:#000;width:93px;overflow:hidden;letter-spacing:0.204px;">auction1</div>
<div class="t" style="left:209px;top:542px;font:12px 'Liberation Sans', sans-serif;line-height:20px;color:#000;width:93px;overflow:hidden;letter-spacing:0.130px;">taxi1</div>
<div class="t" style="left:305px;top:542px;font:12px 'Liberation Sans', sans-serif;line-height:20px;color:#000;width:93px;overflow:hidden;letter-spacing:-0.334px;">f</div>
<div class="t" style="left:401px;top:542px;font:12px 'Liberation Sans', sans-serif;line-height:20px;color:#000;width:93px;overflow:hidden;letter-spacing:0.329px;">bid</div>
<div class="t" style="left:497px;top:542px;font:12px 'Liberation Sans', sans-serif;line-height:20px;color:#000;width:93px;overflow:hidden;letter-spacing:0.064px;">taxi2station, 3</div>
<div class="t" style="left:591px;top:542px;font:12px 'Liberation Sans', sans-serif;line-height:20px;color:#000;width:93px;text-align:right;letter-spacing:0.326px;">7</div>
<div class="t" style="left:687px;top:542px;font:12px 'Liberation Sans', sans-serif;line-height:20px;color:#000;width:93px;text-align:right;letter-spacing:0.326px;">1076431550645</div>
<div style="left:15px;top:575px;width:767px;height:1px;background:#999999;"></div>
<div class="t" style="left:401px;top:558px;font:12px 'Liberation Sans', sans-serif;line-height:20px;color:#000;width:93px;overflow:hidden;letter-spacing:0.109px;">current_time</div>
<div class="t" style="left:591px;top:558px;font:12px 'Liberation Sans', sans-serif;line-height:20px;color:#000;width:93px;text-align:right;letter-spacing:0.326px;">7</div>
<div class="t" style="left:687px;top:558px;font:12px 'Liberation Sans', sans-serif;line-height:20px;color:#000;width:93px;text-align:right;letter-spacing:0.326px;">1076431550647</div>
<div style="left:15px;top:591px;width:767px;height:1px;background:#999999;"></div>
<div class="t" style="left:17px;top:574px;font:12px 'Liberation Sans', sans-serif;line-height:20px;color:#000;width:93px;overflow:hidden;letter-spacing:0.163px;">s0</div>
<div class="t" style="left:113px;top:574px;font:12px 'Liberation Sans', sans-serif;line-height:20px;color:#000;width:93px;overflow:hidden;letter-spacing:0.204px;">auction1</div>
<div class="t" style="left:209px;top:574px;font:12px 'Liberation Sans', sans-serif;line-height:20px;color:#000;width:93px;overflow:hidden;letter-spacing:0.130px;">taxi2</div>
<div class="t" style="left:305px;top:574px;font:12px 'Liberation Sans', sans-serif;line-height:20px;color:#000;width:93px;overflow:hidden;letter-spacing:-0.334px;">f</div>
<div class="t" style="left:401px;top:574px;font:12px 'Liberation Sans', sans-serif;line-height:20px;color:#000;width:93px;overflow:hidden;letter-spacing:0.329px;">bid</div>
<div class="t" style="left:497px;top:574px;font:12px 'Liberation Sans', sans-serif;line-height:20px;color:#000;width:93px;overflow:hidden;letter-spacing:0.064px;">taxi2station, 5</div>
<div class="t" style="left:591px;top:574px;font:12px 'Liberation Sans', sans-serif;line-height:20px;color:#000;width:93px;text-align:right;letter-spacing:0.326px;">8</div>
<div class="t" style="left:687px;top:574px;font:12px 'Liberation Sans', sans-serif;line-height:20px;color:#000;width:93px;text-align:right;letter-spacing:0.326px;">1076431550648</div>
<div style="left:15px;top:592px;width:767px;height:15px;background:#ccccff;"></div>
<div style="left:15px;top:607px;width:767px;height:1px;background:#999999;"></div>
<div class="t" style="left:401px;top:590px;font:12px 'Liberation Sans', sans-serif;line-height:20px;color:#000;width:93px;overflow:hidden;letter-spacing:0.109px;">current_time</div>
<div class="t" style="left:591px;top:590px;font:12px 'Liberation Sans', sans-serif;line-height:20px;color:#000;width:93px;text-align:right;letter-spacing:0.326px;">8</div>
<div class="t" style="left:687px;top:590px;font:12px 'Liberation Sans', sans-serif;line-height:20px;color:#000;width:93px;text-align:right;letter-spacing:0.326px;">1076431550654</div>
<div style="left:15px;top:623px;width:767px;height:1px;background:#999999;"></div>
<div class="t" style="left:17px;top:606px;font:12px 'Liberation Sans', sans-serif;line-height:20px;color:#000;width:93px;overflow:hidden;letter-spacing:0.163px;">s0</div>
<div class="t" style="left:113px;top:606px;font:12px 'Liberation Sans', sans-serif;line-height:20px;color:#000;width:93px;overflow:hidden;letter-spacing:0.204px;">auction1</div>
<div class="t" style="left:209px;top:606px;font:12px 'Liberation Sans', sans-serif;line-height:20px;color:#000;width:93px;overflow:hidden;letter-spacing:0.130px;">taxi3</div>
<div class="t" style="left:305px;top:606px;font:12px 'Liberation Sans', sans-serif;line-height:20px;color:#000;width:93px;overflow:hidden;letter-spacing:-0.334px;">f</div>
<div class="t" style="left:401px;top:606px;font:12px 'Liberation Sans', sans-serif;line-height:20px;color:#000;width:93px;overflow:hidden;letter-spacing:0.329px;">bid</div>
<div class="t" style="left:497px;top:606px;font:12px 'Liberation Sans', sans-serif;line-height:20px;color:#000;width:93px;overflow:hidden;letter-spacing:0.064px;">taxi2station, 7</div>
<div class="t" style="left:591px;top:606px;font:12px 'Liberation Sans', sans-serif;line-height:20px;color:#000;width:93px;text-align:right;letter-spacing:0.326px;">9</div>
<div class="t" style="left:687px;top:606px;font:12px 'Liberation Sans', sans-serif;line-height:20px;color:#000;width:93px;text-align:right;letter-spacing:0.326px;">1076431550655</div>
<div style="left:15px;top:639px;width:767px;height:1px;background:#999999;"></div>
<div class="t" style="left:401px;top:622px;font:12px 'Liberation Sans', sans-serif;line-height:20px;color:#000;width:93px;overflow:hidden;letter-spacing:0.109px;">current_time</div>
<div class="t" style="left:591px;top:622px;font:12px 'Liberation Sans', sans-serif;line-height:20px;color:#000;width:93px;text-align:right;letter-spacing:0.326px;">11</div>
<div class="t" style="left:687px;top:622px;font:12px 'Liberation Sans', sans-serif;line-height:20px;color:#000;width:93px;text-align:right;letter-spacing:0.326px;">1076431550657</div>
<div style="left:15px;top:655px;width:767px;height:1px;background:#999999;"></div>
<div class="t" style="left:17px;top:638px;font:12px 'Liberation Sans', sans-serif;line-height:20px;color:#000;width:93px;overflow:hidden;letter-spacing:0.163px;">s0</div>
<div class="t" style="left:113px;top:638px;font:12px 'Liberation Sans', sans-serif;line-height:20px;color:#000;width:93px;overflow:hidden;letter-spacing:0.204px;">auction1</div>
<div class="t" style="left:209px;top:638px;font:12px 'Liberation Sans', sans-serif;line-height:20px;color:#000;width:93px;overflow:hidden;letter-spacing:-0.334px;">f</div>
<div class="t" style="left:305px;top:638px;font:12px 'Liberation Sans', sans-serif;line-height:20px;color:#000;width:93px;overflow:hidden;letter-spacing:0.130px;">taxi1</div>
<div class="t" style="left:401px;top:638px;font:12px 'Liberation Sans', sans-serif;line-height:20px;color:#000;width:93px;overflow:hidden;letter-spacing:0.219px;">answer</div>
<div class="t" style="left:497px;top:638px;font:12px 'Liberation Sans', sans-serif;line-height:20px;color:#000;width:93px;overflow:hidden;letter-spacing:0.016px;">win, taxi2statio...</div>
<div class="t" style="left:591px;top:638px;font:12px 'Liberation Sans', sans-serif;line-height:20px;color:#000;width:93px;text-align:right;letter-spacing:0.326px;">12</div>
<div class="t" style="left:687px;top:638px;font:12px 'Liberation Sans', sans-serif;line-height:20px;color:#000;width:93px;text-align:right;letter-spacing:0.326px;">1076431550658</div>
<div style="left:15px;top:671px;width:767px;height:1px;background:#999999;"></div>
<div class="t" style="left:401px;top:654px;font:12px 'Liberation Sans', sans-serif;line-height:20px;color:#000;width:93px;overflow:hidden;letter-spacing:-0.073px;">CLOSE_HISTO...</div>
<div class="t" style="left:591px;top:654px;font:12px 'Liberation Sans', sans-serif;line-height:20px;color:#000;width:93px;text-align:right;letter-spacing:0.326px;">1076431686999</div>
<div class="t" style="left:687px;top:654px;font:12px 'Liberation Sans', sans-serif;line-height:20px;color:#000;width:93px;text-align:right;letter-spacing:0.326px;">1076431686999</div>
<div style="left:110px;top:464px;width:1px;height:208px;background:#999999;"></div>
<div style="left:206px;top:464px;width:1px;height:208px;background:#999999;"></div>
<div style="left:302px;top:464px;width:1px;height:208px;background:#999999;"></div>
<div style="left:398px;top:464px;width:1px;height:208px;background:#999999;"></div>
<div style="left:494px;top:464px;width:1px;height:208px;background:#999999;"></div>
<div style="left:590px;top:464px;width:1px;height:208px;background:#999999;"></div>
<div style="left:686px;top:464px;width:1px;height:208px;background:#999999;"></div>
<div style="left:782px;top:464px;width:1px;height:208px;background:#999999;"></div>
<div style="left:3px;top:707px;width:792px;height:1px;background:#ffffff;"></div>
<div style="left:3px;top:708px;width:792px;height:1px;background:#ffffff;"></div>
<div style="left:3px;top:707px;width:1px;height:28px;background:#ffffff;"></div>
<div style="left:4px;top:707px;width:1px;height:27px;background:#ffffff;"></div>
<div style="left:3px;top:733px;width:792px;height:1px;background:#808080;"></div>
<div style="left:3px;top:734px;width:792px;height:1px;background:#666666;"></div>
<div style="left:793px;top:707px;width:1px;height:28px;background:#808080;"></div>
<div style="left:794px;top:707px;width:1px;height:28px;background:#666666;"></div>
<div style="left:5px;top:709px;width:640px;height:1px;background:#666666;"></div>
<div style="left:5px;top:710px;width:639px;height:1px;background:#808080;"></div>
<div style="left:5px;top:709px;width:1px;height:24px;background:#666666;"></div>
<div style="left:6px;top:709px;width:1px;height:23px;background:#808080;"></div>
<div style="left:6px;top:731px;width:639px;height:1px;background:#f4f4f4;"></div>
<div style="left:5px;top:732px;width:640px;height:1px;background:#ffffff;"></div>
<div style="left:643px;top:710px;width:1px;height:23px;background:#f4f4f4;"></div>
<div style="left:644px;top:709px;width:1px;height:24px;background:#ffffff;"></div>
<div class="t" style="left:11px;top:712px;font:bold 12px 'Liberation Sans', sans-serif;line-height:20px;color:#ab8a12;letter-spacing:-0.126px;">Running - Waiting for user command...</div>
<div style="left:645px;top:709px;width:148px;height:1px;background:#666666;"></div>
<div style="left:646px;top:710px;width:147px;height:1px;background:#808080;"></div>
<div style="left:645px;top:709px;width:1px;height:24px;background:#666666;"></div>
<div style="left:646px;top:710px;width:1px;height:22px;background:#808080;"></div>
<div style="left:646px;top:732px;width:147px;height:1px;background:#999999;"></div>
<div style="left:792px;top:709px;width:1px;height:24px;background:#999999;"></div>
</div></body></html>
